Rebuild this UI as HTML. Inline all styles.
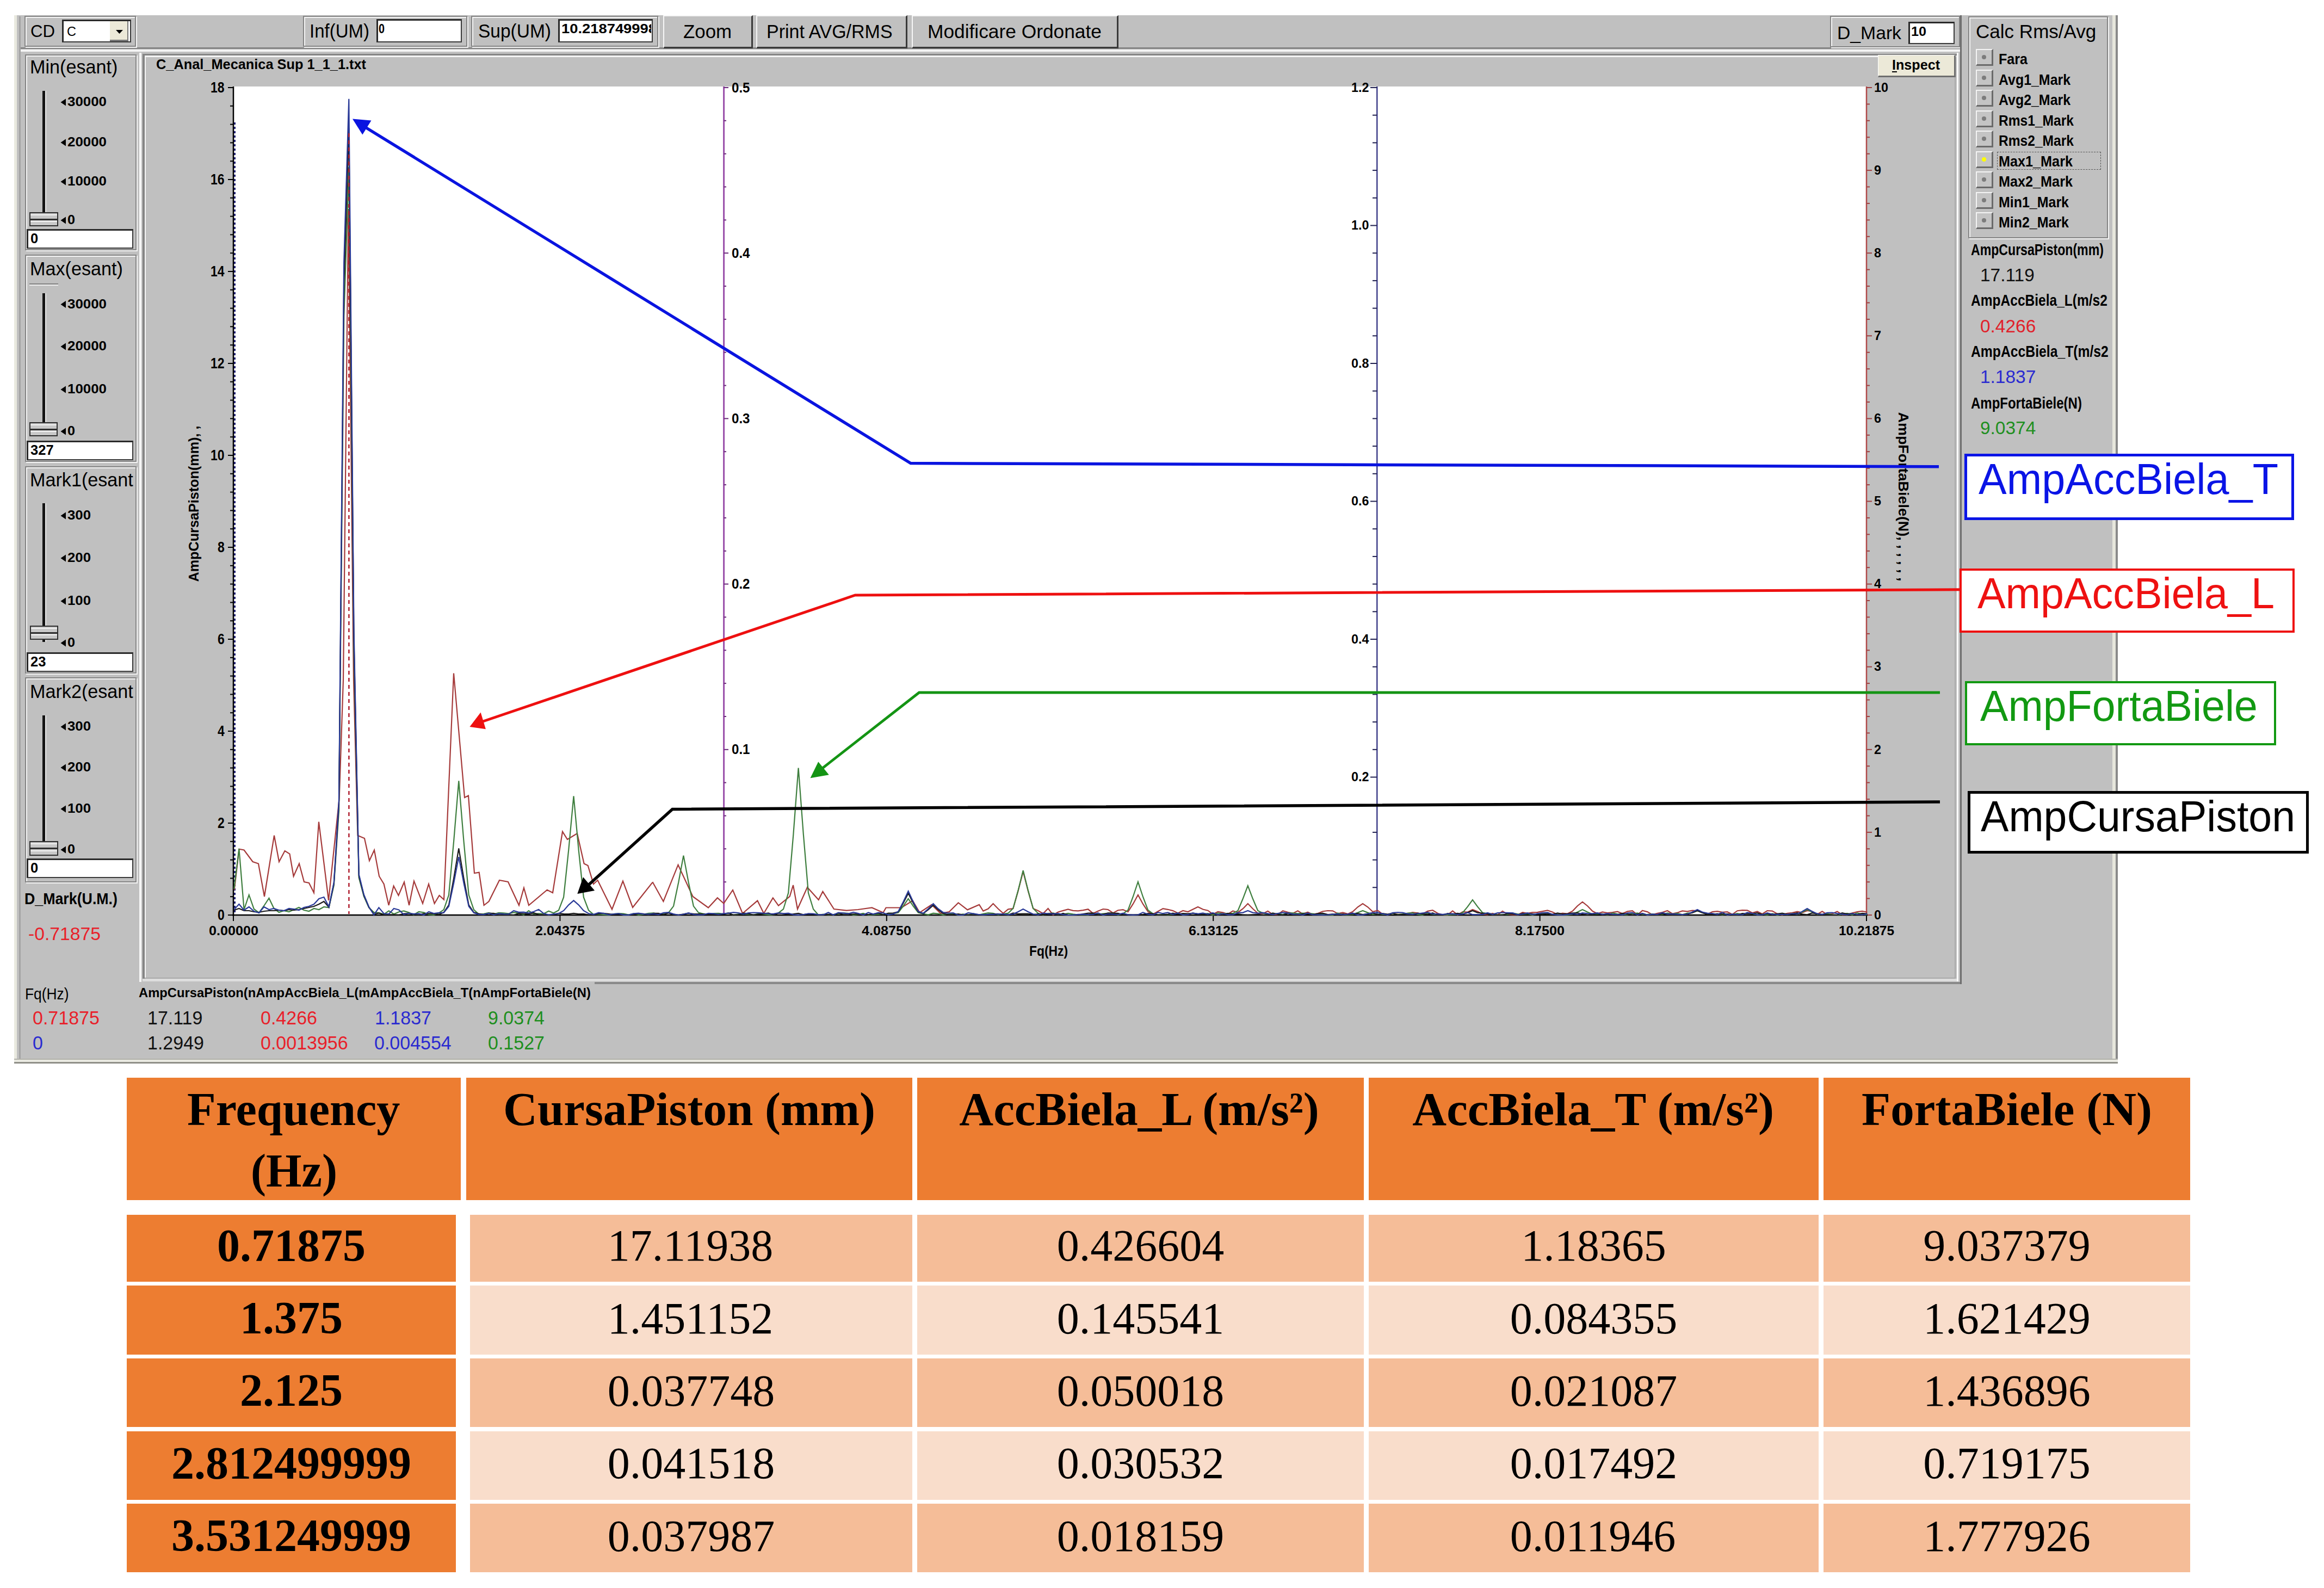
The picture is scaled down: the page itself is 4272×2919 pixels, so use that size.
<!DOCTYPE html>
<html><head><meta charset="utf-8"><style>
html,body{margin:0;padding:0;}
body{width:4272px;height:2919px;position:relative;overflow:hidden;background:#fff;}
.t{position:absolute;white-space:pre;font-kerning:none;}
.b{position:absolute;}
svg{position:absolute;left:0;top:0;}
</style></head><body>
<div class="b" style="left:26.0px;top:28.0px;width:3867.0px;height:1927.0px;background:#c0c0c0;"></div>
<div class="b" style="left:26.0px;top:28.0px;width:5.0px;height:1925.0px;background:#e9e9df;"></div>
<div class="b" style="left:35.0px;top:30.0px;width:3.0px;height:1923.0px;background:#a4a4a4;"></div>
<div class="b" style="left:3883.0px;top:28.0px;width:6.0px;height:1925.0px;background:#e6e6dc;"></div>
<div class="b" style="left:3889.0px;top:28.0px;width:4.0px;height:1925.0px;background:#8a8a8a;"></div>
<div class="b" style="left:26.0px;top:1945.5px;width:3867.0px;height:2.5px;background:#b2b2aa;"></div>
<div class="b" style="left:26.0px;top:1948.0px;width:3867.0px;height:4.0px;background:#ebebe3;"></div>
<div class="b" style="left:26.0px;top:1952.0px;width:3867.0px;height:3.0px;background:#8f8f88;"></div>
<div class="b" style="left:38.0px;top:87.0px;width:3568.0px;height:3.0px;background:#858585;"></div>
<div class="b" style="left:38.0px;top:91.0px;width:3568.0px;height:4.0px;background:#f4f4f4;"></div>
<div class="b" style="left:45.0px;top:29.0px;width:205.0px;height:57.0px;border:2px solid #858585;box-shadow:inset 2px 2px 0 #f4f4f4, 2px 2px 0 #f4f4f4;box-sizing:border-box;"></div>
<div class="t" style="left:56.0px;top:40.9px;font:normal 31.98px/31.98px 'Liberation Sans', sans-serif;color:#000;transform:scaleX(0.9743);transform-origin:0 0;">CD</div>
<div class="b" style="left:114.0px;top:36.0px;width:127.0px;height:42.0px;background:#fff;border-style:solid;border-width:3px 2px 2px 3px;border-color:#2a2a2a #3a3a3a #3a3a3a #2a2a2a;box-sizing:border-box;"></div>
<div class="t" style="left:123.0px;top:46.1px;font:normal 24.71px/24.71px 'Liberation Sans', sans-serif;color:#000;transform:scaleX(0.9527);transform-origin:0 0;">C</div>
<div class="b" style="left:202.0px;top:39.0px;width:34.0px;height:37.0px;background:#ece9d8;border-right:2px solid #777;border-bottom:3px solid #777;box-sizing:border-box;"></div>
<div class="b" style="left:557.0px;top:29.0px;width:302.0px;height:57.0px;border:2px solid #858585;box-shadow:inset 2px 2px 0 #f4f4f4, 2px 2px 0 #f4f4f4;box-sizing:border-box;"></div>
<div class="t" style="left:569.0px;top:40.1px;font:normal 34.16px/34.16px 'Liberation Sans', sans-serif;color:#000;transform:scaleX(0.9662);transform-origin:0 0;">Inf(UM)</div>
<div class="b" style="left:692.0px;top:35.0px;width:157.0px;height:43.0px;background:#fff;border-style:solid;border-width:3px 2px 2px 3px;border-color:#2a2a2a #3a3a3a #3a3a3a #2a2a2a;box-sizing:border-box;"></div>
<div class="t" style="left:696.0px;top:41.1px;font:bold 24.71px/24.71px 'Liberation Sans', sans-serif;color:#000;transform:scaleX(0.8005);transform-origin:0 0;">0</div>
<div class="b" style="left:866.0px;top:29.0px;width:344.0px;height:57.0px;border:2px solid #858585;box-shadow:inset 2px 2px 0 #f4f4f4, 2px 2px 0 #f4f4f4;box-sizing:border-box;"></div>
<div class="t" style="left:879.0px;top:40.1px;font:normal 34.16px/34.16px 'Liberation Sans', sans-serif;color:#000;transform:scaleX(0.9806);transform-origin:0 0;">Sup(UM)</div>
<div class="b" style="left:1026.0px;top:35.0px;width:174.0px;height:43.0px;background:#fff;border-style:solid;border-width:3px 2px 2px 3px;border-color:#2a2a2a #3a3a3a #3a3a3a #2a2a2a;box-sizing:border-box;"></div>
<div class="b" style="left:1029px;top:38px;width:168px;height:37px;overflow:hidden;">
<div class="t" style="left:3.0px;top:3.1px;font:bold 24.71px/24.71px 'Liberation Sans', sans-serif;color:#000;transform:scaleX(1.1074);transform-origin:0 0;">10.218749998</div>
</div>
<div class="b" style="left:1219.0px;top:28.0px;width:165.0px;height:61.0px;background:#c0c0c0;border-style:solid;border-width:2px 3px 3px 2px;border-color:#f6f6f6 #3a3a3a #3a3a3a #f6f6f6;box-sizing:border-box;"></div>
<div class="t" style="left:1256.0px;top:40.5px;font:normal 34.88px/34.88px 'Liberation Sans', sans-serif;color:#000;">Zoom</div>
<div class="b" style="left:1390.0px;top:28.0px;width:278.0px;height:61.0px;background:#c0c0c0;border-style:solid;border-width:2px 3px 3px 2px;border-color:#f6f6f6 #3a3a3a #3a3a3a #f6f6f6;box-sizing:border-box;"></div>
<div class="t" style="left:1409.0px;top:40.5px;font:normal 34.88px/34.88px 'Liberation Sans', sans-serif;color:#000;transform:scaleX(0.9740);transform-origin:0 0;">Print AVG/RMS</div>
<div class="b" style="left:1676.0px;top:28.0px;width:380.0px;height:61.0px;background:#c0c0c0;border-style:solid;border-width:2px 3px 3px 2px;border-color:#f6f6f6 #3a3a3a #3a3a3a #f6f6f6;box-sizing:border-box;"></div>
<div class="t" style="left:1705.0px;top:40.5px;font:normal 34.88px/34.88px 'Liberation Sans', sans-serif;color:#000;transform:scaleX(1.0125);transform-origin:0 0;">Modificare Ordonate</div>
<div class="b" style="left:3364.0px;top:29.0px;width:239.0px;height:58.0px;border:2px solid #858585;box-shadow:inset 2px 2px 0 #f4f4f4, 2px 2px 0 #f4f4f4;box-sizing:border-box;"></div>
<div class="t" style="left:3377.0px;top:43.7px;font:normal 33.43px/33.43px 'Liberation Sans', sans-serif;color:#000;transform:scaleX(1.0084);transform-origin:0 0;">D_Mark</div>
<div class="b" style="left:3508.0px;top:40.0px;width:85.0px;height:41.0px;background:#fff;border-style:solid;border-width:3px 2px 2px 3px;border-color:#2a2a2a #3a3a3a #3a3a3a #2a2a2a;box-sizing:border-box;"></div>
<div class="t" style="left:3513.0px;top:45.6px;font:bold 24.71px/24.71px 'Liberation Sans', sans-serif;color:#000;transform:scaleX(1.0188);transform-origin:0 0;">10</div>
<div class="b" style="left:46.0px;top:100.0px;width:205.0px;height:360.0px;border:2px solid #858585;box-shadow:inset 2px 2px 0 #f4f4f4, 2px 2px 0 #f4f4f4;box-sizing:border-box;"></div>
<div class="t" style="left:55.0px;top:106.1px;font:normal 34.16px/34.16px 'Liberation Sans', sans-serif;color:#000;">Min(esant)</div>
<div class="b" style="left:78.0px;top:167.0px;width:4.5px;height:237.0px;background:#141414;"></div>
<div class="b" style="left:83.0px;top:167.0px;width:2.0px;height:237.0px;background:#e8e8e8;"></div>
<div class="t" style="left:124.0px;top:176.3px;font:bold 23.26px/23.26px 'Liberation Sans', sans-serif;color:#000;transform:scaleX(1.1134);transform-origin:0 0;">30000</div>
<div class="t" style="left:124.0px;top:250.3px;font:bold 23.26px/23.26px 'Liberation Sans', sans-serif;color:#000;transform:scaleX(1.1134);transform-origin:0 0;">20000</div>
<div class="t" style="left:124.0px;top:322.3px;font:bold 23.26px/23.26px 'Liberation Sans', sans-serif;color:#000;transform:scaleX(1.1134);transform-origin:0 0;">10000</div>
<div class="t" style="left:124.0px;top:393.3px;font:bold 23.26px/23.26px 'Liberation Sans', sans-serif;color:#000;transform:scaleX(1.0824);transform-origin:0 0;">0</div>
<div class="b" style="left:53.5px;top:390.0px;width:53.0px;height:26.0px;background:#c8c8c8;border:2px solid #303030;box-sizing:border-box;"></div>
<div class="b" style="left:55.5px;top:401.5px;width:49.0px;height:3.0px;background:#303030;"></div>
<div class="b" style="left:55.5px;top:394.0px;width:49.0px;height:2.0px;background:#f0f0f0;"></div>
<div class="b" style="left:55.5px;top:406.0px;width:49.0px;height:2.0px;background:#f0f0f0;"></div>
<div class="b" style="left:49.0px;top:421.0px;width:196.0px;height:36.0px;background:#fff;border-style:solid;border-width:3px 2px 2px 3px;border-color:#2a2a2a #3a3a3a #3a3a3a #2a2a2a;box-sizing:border-box;"></div>
<div class="t" style="left:56.0px;top:424.8px;font:bold 26.16px/26.16px 'Liberation Sans', sans-serif;color:#000;transform:scaleX(0.9759);transform-origin:0 0;">0</div>
<div class="b" style="left:46.0px;top:468.0px;width:205.0px;height:381.0px;border:2px solid #858585;box-shadow:inset 2px 2px 0 #f4f4f4, 2px 2px 0 #f4f4f4;box-sizing:border-box;"></div>
<div class="t" style="left:55.0px;top:477.1px;font:normal 34.16px/34.16px 'Liberation Sans', sans-serif;color:#000;">Max(esant)</div>
<div class="b" style="left:78.0px;top:539.0px;width:4.5px;height:238.0px;background:#141414;"></div>
<div class="b" style="left:83.0px;top:539.0px;width:2.0px;height:238.0px;background:#e8e8e8;"></div>
<div class="t" style="left:124.0px;top:547.8px;font:bold 23.26px/23.26px 'Liberation Sans', sans-serif;color:#000;transform:scaleX(1.1134);transform-origin:0 0;">30000</div>
<div class="t" style="left:124.0px;top:625.3px;font:bold 23.26px/23.26px 'Liberation Sans', sans-serif;color:#000;transform:scaleX(1.1134);transform-origin:0 0;">20000</div>
<div class="t" style="left:124.0px;top:704.3px;font:bold 23.26px/23.26px 'Liberation Sans', sans-serif;color:#000;transform:scaleX(1.1134);transform-origin:0 0;">10000</div>
<div class="t" style="left:124.0px;top:781.3px;font:bold 23.26px/23.26px 'Liberation Sans', sans-serif;color:#000;transform:scaleX(1.0824);transform-origin:0 0;">0</div>
<div class="b" style="left:54.0px;top:776.0px;width:52.0px;height:26.0px;background:#c8c8c8;border:2px solid #303030;box-sizing:border-box;"></div>
<div class="b" style="left:56.0px;top:787.5px;width:48.0px;height:3.0px;background:#303030;"></div>
<div class="b" style="left:56.0px;top:780.0px;width:48.0px;height:2.0px;background:#f0f0f0;"></div>
<div class="b" style="left:56.0px;top:792.0px;width:48.0px;height:2.0px;background:#f0f0f0;"></div>
<div class="b" style="left:54.0px;top:521.0px;width:53.0px;height:2.0px;background:#808080;"></div>
<div class="b" style="left:54.0px;top:523.0px;width:53.0px;height:2.0px;background:#f0f0f0;"></div>
<div class="b" style="left:49.0px;top:810.0px;width:196.0px;height:36.0px;background:#fff;border-style:solid;border-width:3px 2px 2px 3px;border-color:#2a2a2a #3a3a3a #3a3a3a #2a2a2a;box-sizing:border-box;"></div>
<div class="t" style="left:56.0px;top:813.8px;font:bold 26.16px/26.16px 'Liberation Sans', sans-serif;color:#000;transform:scaleX(0.9759);transform-origin:0 0;">327</div>
<div class="b" style="left:46.0px;top:857.0px;width:205.0px;height:381.0px;border:2px solid #858585;box-shadow:inset 2px 2px 0 #f4f4f4, 2px 2px 0 #f4f4f4;box-sizing:border-box;"></div>
<div class="b" style="left:50px;top:861px;width:195px;height:40px;overflow:hidden;">
<div class="t" style="left:5.0px;top:4.1px;font:normal 34.16px/34.16px 'Liberation Sans', sans-serif;color:#000;">Mark1(esant)</div>
</div>
<div class="b" style="left:78.0px;top:925.0px;width:4.5px;height:255.0px;background:#141414;"></div>
<div class="b" style="left:83.0px;top:925.0px;width:2.0px;height:255.0px;background:#e8e8e8;"></div>
<div class="t" style="left:124.0px;top:936.3px;font:bold 23.26px/23.26px 'Liberation Sans', sans-serif;color:#000;transform:scaleX(1.1082);transform-origin:0 0;">300</div>
<div class="t" style="left:124.0px;top:1014.3px;font:bold 23.26px/23.26px 'Liberation Sans', sans-serif;color:#000;transform:scaleX(1.1082);transform-origin:0 0;">200</div>
<div class="t" style="left:124.0px;top:1093.3px;font:bold 23.26px/23.26px 'Liberation Sans', sans-serif;color:#000;transform:scaleX(1.1082);transform-origin:0 0;">100</div>
<div class="t" style="left:124.0px;top:1170.3px;font:bold 23.26px/23.26px 'Liberation Sans', sans-serif;color:#000;transform:scaleX(1.0824);transform-origin:0 0;">0</div>
<div class="b" style="left:54.7px;top:1150.0px;width:52.1px;height:26.0px;background:#c8c8c8;border:2px solid #303030;box-sizing:border-box;"></div>
<div class="b" style="left:56.7px;top:1161.5px;width:48.1px;height:3.0px;background:#303030;"></div>
<div class="b" style="left:56.7px;top:1154.0px;width:48.1px;height:2.0px;background:#f0f0f0;"></div>
<div class="b" style="left:56.7px;top:1166.0px;width:48.1px;height:2.0px;background:#f0f0f0;"></div>
<div class="b" style="left:49.0px;top:1199.0px;width:196.0px;height:36.0px;background:#fff;border-style:solid;border-width:3px 2px 2px 3px;border-color:#2a2a2a #3a3a3a #3a3a3a #2a2a2a;box-sizing:border-box;"></div>
<div class="t" style="left:56.0px;top:1202.8px;font:bold 26.16px/26.16px 'Liberation Sans', sans-serif;color:#000;transform:scaleX(0.9759);transform-origin:0 0;">23</div>
<div class="b" style="left:46.0px;top:1245.0px;width:205.0px;height:377.0px;border:2px solid #858585;box-shadow:inset 2px 2px 0 #f4f4f4, 2px 2px 0 #f4f4f4;box-sizing:border-box;"></div>
<div class="b" style="left:50px;top:1249px;width:195px;height:40px;overflow:hidden;">
<div class="t" style="left:5.0px;top:5.1px;font:normal 34.16px/34.16px 'Liberation Sans', sans-serif;color:#000;">Mark2(esant)</div>
</div>
<div class="b" style="left:78.0px;top:1315.0px;width:4.5px;height:232.0px;background:#141414;"></div>
<div class="b" style="left:83.0px;top:1315.0px;width:2.0px;height:232.0px;background:#e8e8e8;"></div>
<div class="t" style="left:124.0px;top:1324.3px;font:bold 23.26px/23.26px 'Liberation Sans', sans-serif;color:#000;transform:scaleX(1.1082);transform-origin:0 0;">300</div>
<div class="t" style="left:124.0px;top:1399.3px;font:bold 23.26px/23.26px 'Liberation Sans', sans-serif;color:#000;transform:scaleX(1.1082);transform-origin:0 0;">200</div>
<div class="t" style="left:124.0px;top:1475.3px;font:bold 23.26px/23.26px 'Liberation Sans', sans-serif;color:#000;transform:scaleX(1.1082);transform-origin:0 0;">100</div>
<div class="t" style="left:124.0px;top:1550.3px;font:bold 23.26px/23.26px 'Liberation Sans', sans-serif;color:#000;transform:scaleX(1.0824);transform-origin:0 0;">0</div>
<div class="b" style="left:54.0px;top:1546.0px;width:53.0px;height:27.0px;background:#c8c8c8;border:2px solid #303030;box-sizing:border-box;"></div>
<div class="b" style="left:56.0px;top:1558.0px;width:49.0px;height:3.0px;background:#303030;"></div>
<div class="b" style="left:56.0px;top:1550.0px;width:49.0px;height:2.0px;background:#f0f0f0;"></div>
<div class="b" style="left:56.0px;top:1562.5px;width:49.0px;height:2.0px;background:#f0f0f0;"></div>
<div class="b" style="left:49.0px;top:1578.0px;width:196.0px;height:36.0px;background:#fff;border-style:solid;border-width:3px 2px 2px 3px;border-color:#2a2a2a #3a3a3a #3a3a3a #2a2a2a;box-sizing:border-box;"></div>
<div class="t" style="left:56.0px;top:1581.8px;font:bold 26.16px/26.16px 'Liberation Sans', sans-serif;color:#000;transform:scaleX(0.9759);transform-origin:0 0;">0</div>
<div class="t" style="left:45.0px;top:1638.4px;font:bold 29.07px/29.07px 'Liberation Sans', sans-serif;color:#000;transform:scaleX(0.9206);transform-origin:0 0;">D_Mark(U.M.)</div>
<div class="t" style="left:52.0px;top:1699.7px;font:normal 33.43px/33.43px 'Liberation Sans', sans-serif;color:#e8202a;transform:scaleX(1.0078);transform-origin:0 0;">-0.71875</div>
<div class="b" style="left:256.0px;top:97.0px;width:3.5px;height:1708.0px;background:#f6f6f6;"></div>
<div class="b" style="left:262.0px;top:98.6px;width:3338.0px;height:3.2px;background:#858585;"></div>
<div class="b" style="left:265.5px;top:102.0px;width:3330.5px;height:2.5px;background:#f4f4f4;"></div>
<div class="b" style="left:262.0px;top:98.6px;width:3.5px;height:1705.4px;background:#858585;"></div>
<div class="b" style="left:265.5px;top:102.0px;width:2.0px;height:1695.0px;background:#f4f4f4;"></div>
<div class="b" style="left:266.0px;top:1797.0px;width:3329.0px;height:2.0px;background:#a9a9a9;"></div>
<div class="b" style="left:262.0px;top:1799.0px;width:3338.0px;height:5.4px;background:#dedede;"></div>
<div class="b" style="left:1093.0px;top:1805.0px;width:2512.5px;height:3.5px;background:#8a8a8a;"></div>
<div class="b" style="left:3593.0px;top:102.0px;width:2.0px;height:1697.0px;background:#a9a9a9;"></div>
<div class="t" style="left:287.0px;top:106.4px;font:bold 25.00px/25.00px 'Liberation Sans', sans-serif;color:#000;transform:scaleX(1.0139);transform-origin:0 0;">C_Anal_Mecanica Sup 1_1_1.txt</div>
<div class="b" style="left:3452.0px;top:101.0px;width:143.0px;height:41.0px;background:#ece9d8;border-style:solid;border-width:1px 3px 3px 1px;border-color:#fff #6f6f6f #6f6f6f #fff;box-sizing:border-box;"></div>
<div class="t" style="left:3478.0px;top:106.7px;font:bold 25.44px/25.44px 'Liberation Sans', sans-serif;color:#000;transform:scaleX(0.9882);transform-origin:0 0;">Inspect</div>
<div class="b" style="left:3478.0px;top:131.0px;width:9.0px;height:2.0px;background:#000;"></div>
<div class="b" style="left:429.0px;top:159.0px;width:3002.0px;height:1523.0px;background:#fff;"></div>
<div class="b" style="left:3596.8px;top:97.0px;width:2.8px;height:1707.4px;background:#fafafa;"></div>
<div class="b" style="left:3602.8px;top:28.0px;width:2.8px;height:1780.5px;background:#6e6e6e;"></div>
<div class="b" style="left:3618.0px;top:30.0px;width:257.0px;height:408.0px;border:2px solid #858585;box-shadow:inset 2px 2px 0 #f4f4f4, 2px 2px 0 #f4f4f4;box-sizing:border-box;"></div>
<div class="t" style="left:3632.0px;top:40.9px;font:normal 34.88px/34.88px 'Liberation Sans', sans-serif;color:#000;transform:scaleX(1.0047);transform-origin:0 0;">Calc Rms/Avg</div>
<div class="b" style="left:3632.0px;top:90.4px;width:32.0px;height:31.0px;background:#c4c4c4;border-style:solid;border-width:2px 3px 3px 2px;border-color:#f4f4f4 #6a6a6a #6a6a6a #f4f4f4;box-sizing:border-box;"></div>
<div class="b" style="left:3643.0px;top:101.4px;width:8px;height:8px;border-radius:4px;background:#7c7c7c;"></div>
<div class="t" style="left:3674.0px;top:95.2px;font:bold 27.62px/27.62px 'Liberation Sans', sans-serif;color:#000;transform:scaleX(0.9086);transform-origin:0 0;">Fara</div>
<div class="b" style="left:3632.0px;top:127.9px;width:32.0px;height:31.0px;background:#c4c4c4;border-style:solid;border-width:2px 3px 3px 2px;border-color:#f4f4f4 #6a6a6a #6a6a6a #f4f4f4;box-sizing:border-box;"></div>
<div class="b" style="left:3643.0px;top:138.9px;width:8px;height:8px;border-radius:4px;background:#7c7c7c;"></div>
<div class="t" style="left:3674.0px;top:132.7px;font:bold 27.62px/27.62px 'Liberation Sans', sans-serif;color:#000;transform:scaleX(0.9026);transform-origin:0 0;">Avg1_Mark</div>
<div class="b" style="left:3632.0px;top:165.4px;width:32.0px;height:31.0px;background:#c4c4c4;border-style:solid;border-width:2px 3px 3px 2px;border-color:#f4f4f4 #6a6a6a #6a6a6a #f4f4f4;box-sizing:border-box;"></div>
<div class="b" style="left:3643.0px;top:176.4px;width:8px;height:8px;border-radius:4px;background:#7c7c7c;"></div>
<div class="t" style="left:3674.0px;top:170.2px;font:bold 27.62px/27.62px 'Liberation Sans', sans-serif;color:#000;transform:scaleX(0.9026);transform-origin:0 0;">Avg2_Mark</div>
<div class="b" style="left:3632.0px;top:202.9px;width:32.0px;height:31.0px;background:#c4c4c4;border-style:solid;border-width:2px 3px 3px 2px;border-color:#f4f4f4 #6a6a6a #6a6a6a #f4f4f4;box-sizing:border-box;"></div>
<div class="b" style="left:3643.0px;top:213.9px;width:8px;height:8px;border-radius:4px;background:#7c7c7c;"></div>
<div class="t" style="left:3674.0px;top:207.7px;font:bold 27.62px/27.62px 'Liberation Sans', sans-serif;color:#000;transform:scaleX(0.8901);transform-origin:0 0;">Rms1_Mark</div>
<div class="b" style="left:3632.0px;top:240.4px;width:32.0px;height:31.0px;background:#c4c4c4;border-style:solid;border-width:2px 3px 3px 2px;border-color:#f4f4f4 #6a6a6a #6a6a6a #f4f4f4;box-sizing:border-box;"></div>
<div class="b" style="left:3643.0px;top:251.4px;width:8px;height:8px;border-radius:4px;background:#7c7c7c;"></div>
<div class="t" style="left:3674.0px;top:245.2px;font:bold 27.62px/27.62px 'Liberation Sans', sans-serif;color:#000;transform:scaleX(0.8901);transform-origin:0 0;">Rms2_Mark</div>
<div class="b" style="left:3632.0px;top:277.9px;width:32.0px;height:31.0px;background:#c4c4c4;border-style:solid;border-width:2px 3px 3px 2px;border-color:#f4f4f4 #6a6a6a #6a6a6a #f4f4f4;box-sizing:border-box;"></div>
<div class="b" style="left:3643.0px;top:288.9px;width:8px;height:8px;border-radius:4px;background:#ffff00;"></div>
<div class="t" style="left:3674.0px;top:282.7px;font:bold 27.62px/27.62px 'Liberation Sans', sans-serif;color:#000;transform:scaleX(0.9133);transform-origin:0 0;">Max1_Mark</div>
<div class="b" style="left:3632.0px;top:315.4px;width:32.0px;height:31.0px;background:#c4c4c4;border-style:solid;border-width:2px 3px 3px 2px;border-color:#f4f4f4 #6a6a6a #6a6a6a #f4f4f4;box-sizing:border-box;"></div>
<div class="b" style="left:3643.0px;top:326.4px;width:8px;height:8px;border-radius:4px;background:#7c7c7c;"></div>
<div class="t" style="left:3674.0px;top:320.2px;font:bold 27.62px/27.62px 'Liberation Sans', sans-serif;color:#000;transform:scaleX(0.9133);transform-origin:0 0;">Max2_Mark</div>
<div class="b" style="left:3632.0px;top:352.9px;width:32.0px;height:31.0px;background:#c4c4c4;border-style:solid;border-width:2px 3px 3px 2px;border-color:#f4f4f4 #6a6a6a #6a6a6a #f4f4f4;box-sizing:border-box;"></div>
<div class="b" style="left:3643.0px;top:363.9px;width:8px;height:8px;border-radius:4px;background:#7c7c7c;"></div>
<div class="t" style="left:3674.0px;top:357.7px;font:bold 27.62px/27.62px 'Liberation Sans', sans-serif;color:#000;transform:scaleX(0.9038);transform-origin:0 0;">Min1_Mark</div>
<div class="b" style="left:3632.0px;top:390.4px;width:32.0px;height:31.0px;background:#c4c4c4;border-style:solid;border-width:2px 3px 3px 2px;border-color:#f4f4f4 #6a6a6a #6a6a6a #f4f4f4;box-sizing:border-box;"></div>
<div class="b" style="left:3643.0px;top:401.4px;width:8px;height:8px;border-radius:4px;background:#7c7c7c;"></div>
<div class="t" style="left:3674.0px;top:395.2px;font:bold 27.62px/27.62px 'Liberation Sans', sans-serif;color:#000;transform:scaleX(0.9038);transform-origin:0 0;">Min2_Mark</div>
<div class="b" style="left:3671.0px;top:279.0px;width:191.0px;height:33.0px;border:1.5px dashed #555;box-sizing:border-box;"></div>
<div class="t" style="left:3623.0px;top:444.4px;font:bold 30.23px/30.23px 'Liberation Sans', sans-serif;color:#000;transform:scaleX(0.7645);transform-origin:0 0;">AmpCursaPiston(mm)</div>
<div class="t" style="left:3640.0px;top:488.7px;font:normal 33.43px/33.43px 'Liberation Sans', sans-serif;color:#111;">17.119</div>
<div class="t" style="left:3623.0px;top:536.9px;font:bold 30.23px/30.23px 'Liberation Sans', sans-serif;color:#000;transform:scaleX(0.8119);transform-origin:0 0;">AmpAccBiela_L(m/s2</div>
<div class="t" style="left:3640.0px;top:583.3px;font:normal 33.43px/33.43px 'Liberation Sans', sans-serif;color:#e0202a;">0.4266</div>
<div class="t" style="left:3623.0px;top:631.4px;font:bold 30.23px/30.23px 'Liberation Sans', sans-serif;color:#000;transform:scaleX(0.8183);transform-origin:0 0;">AmpAccBiela_T(m/s2</div>
<div class="t" style="left:3640.0px;top:675.7px;font:normal 33.43px/33.43px 'Liberation Sans', sans-serif;color:#2a2ad0;">1.1837</div>
<div class="t" style="left:3623.0px;top:725.9px;font:bold 30.23px/30.23px 'Liberation Sans', sans-serif;color:#000;transform:scaleX(0.7938);transform-origin:0 0;">AmpFortaBiele(N)</div>
<div class="t" style="left:3640.0px;top:770.4px;font:normal 33.43px/33.43px 'Liberation Sans', sans-serif;color:#1f8f1f;">9.0374</div>
<div class="t" style="left:400.2px;top:1668.7px;font:bold 26.89px/26.89px 'Liberation Sans', sans-serif;color:#000;transform:scaleX(0.8559);transform-origin:0 0;">0</div>
<div class="t" style="left:400.2px;top:1499.7px;font:bold 26.89px/26.89px 'Liberation Sans', sans-serif;color:#000;transform:scaleX(0.8559);transform-origin:0 0;">2</div>
<div class="t" style="left:400.2px;top:1330.7px;font:bold 26.89px/26.89px 'Liberation Sans', sans-serif;color:#000;transform:scaleX(0.8559);transform-origin:0 0;">4</div>
<div class="t" style="left:400.2px;top:1161.7px;font:bold 26.89px/26.89px 'Liberation Sans', sans-serif;color:#000;transform:scaleX(0.8559);transform-origin:0 0;">6</div>
<div class="t" style="left:400.2px;top:992.7px;font:bold 26.89px/26.89px 'Liberation Sans', sans-serif;color:#000;transform:scaleX(0.8559);transform-origin:0 0;">8</div>
<div class="t" style="left:387.4px;top:823.7px;font:bold 26.89px/26.89px 'Liberation Sans', sans-serif;color:#000;transform:scaleX(0.8559);transform-origin:0 0;">10</div>
<div class="t" style="left:387.4px;top:654.7px;font:bold 26.89px/26.89px 'Liberation Sans', sans-serif;color:#000;transform:scaleX(0.8559);transform-origin:0 0;">12</div>
<div class="t" style="left:387.4px;top:485.7px;font:bold 26.89px/26.89px 'Liberation Sans', sans-serif;color:#000;transform:scaleX(0.8559);transform-origin:0 0;">14</div>
<div class="t" style="left:387.4px;top:316.7px;font:bold 26.89px/26.89px 'Liberation Sans', sans-serif;color:#000;transform:scaleX(0.8559);transform-origin:0 0;">16</div>
<div class="t" style="left:387.4px;top:147.7px;font:bold 26.89px/26.89px 'Liberation Sans', sans-serif;color:#000;transform:scaleX(0.8559);transform-origin:0 0;">18</div>
<div class="t" style="left:1344.5px;top:1365.3px;font:bold 25.44px/25.44px 'Liberation Sans', sans-serif;color:#000;transform:scaleX(0.9474);transform-origin:0 0;">0.1</div>
<div class="t" style="left:1344.5px;top:1061.1px;font:bold 25.44px/25.44px 'Liberation Sans', sans-serif;color:#000;transform:scaleX(0.9474);transform-origin:0 0;">0.2</div>
<div class="t" style="left:1344.5px;top:756.9px;font:bold 25.44px/25.44px 'Liberation Sans', sans-serif;color:#000;transform:scaleX(0.9474);transform-origin:0 0;">0.3</div>
<div class="t" style="left:1344.5px;top:452.7px;font:bold 25.44px/25.44px 'Liberation Sans', sans-serif;color:#000;transform:scaleX(0.9474);transform-origin:0 0;">0.4</div>
<div class="t" style="left:1344.5px;top:148.5px;font:bold 25.44px/25.44px 'Liberation Sans', sans-serif;color:#000;transform:scaleX(0.9474);transform-origin:0 0;">0.5</div>
<div class="t" style="left:2483.6px;top:1416.2px;font:bold 23.98px/23.98px 'Liberation Sans', sans-serif;color:#000;transform:scaleX(0.9718);transform-origin:0 0;">0.2</div>
<div class="t" style="left:2483.6px;top:1162.7px;font:bold 23.98px/23.98px 'Liberation Sans', sans-serif;color:#000;transform:scaleX(0.9718);transform-origin:0 0;">0.4</div>
<div class="t" style="left:2483.6px;top:909.2px;font:bold 23.98px/23.98px 'Liberation Sans', sans-serif;color:#000;transform:scaleX(0.9718);transform-origin:0 0;">0.6</div>
<div class="t" style="left:2483.6px;top:655.7px;font:bold 23.98px/23.98px 'Liberation Sans', sans-serif;color:#000;transform:scaleX(0.9718);transform-origin:0 0;">0.8</div>
<div class="t" style="left:2483.6px;top:402.2px;font:bold 23.98px/23.98px 'Liberation Sans', sans-serif;color:#000;transform:scaleX(0.9718);transform-origin:0 0;">1.0</div>
<div class="t" style="left:2483.6px;top:148.7px;font:bold 23.98px/23.98px 'Liberation Sans', sans-serif;color:#000;transform:scaleX(0.9718);transform-origin:0 0;">1.2</div>
<div class="t" style="left:3445.0px;top:1669.7px;font:bold 23.98px/23.98px 'Liberation Sans', sans-serif;color:#000;transform:scaleX(0.9747);transform-origin:0 0;">0</div>
<div class="t" style="left:3445.0px;top:1517.6px;font:bold 23.98px/23.98px 'Liberation Sans', sans-serif;color:#000;transform:scaleX(0.9747);transform-origin:0 0;">1</div>
<div class="t" style="left:3445.0px;top:1365.5px;font:bold 23.98px/23.98px 'Liberation Sans', sans-serif;color:#000;transform:scaleX(0.9747);transform-origin:0 0;">2</div>
<div class="t" style="left:3445.0px;top:1213.4px;font:bold 23.98px/23.98px 'Liberation Sans', sans-serif;color:#000;transform:scaleX(0.9747);transform-origin:0 0;">3</div>
<div class="t" style="left:3445.0px;top:1061.3px;font:bold 23.98px/23.98px 'Liberation Sans', sans-serif;color:#000;transform:scaleX(0.9747);transform-origin:0 0;">4</div>
<div class="t" style="left:3445.0px;top:909.2px;font:bold 23.98px/23.98px 'Liberation Sans', sans-serif;color:#000;transform:scaleX(0.9747);transform-origin:0 0;">5</div>
<div class="t" style="left:3445.0px;top:757.1px;font:bold 23.98px/23.98px 'Liberation Sans', sans-serif;color:#000;transform:scaleX(0.9747);transform-origin:0 0;">6</div>
<div class="t" style="left:3445.0px;top:605.0px;font:bold 23.98px/23.98px 'Liberation Sans', sans-serif;color:#000;transform:scaleX(0.9747);transform-origin:0 0;">7</div>
<div class="t" style="left:3445.0px;top:452.9px;font:bold 23.98px/23.98px 'Liberation Sans', sans-serif;color:#000;transform:scaleX(0.9747);transform-origin:0 0;">8</div>
<div class="t" style="left:3445.0px;top:300.8px;font:bold 23.98px/23.98px 'Liberation Sans', sans-serif;color:#000;transform:scaleX(0.9747);transform-origin:0 0;">9</div>
<div class="t" style="left:3445.0px;top:148.7px;font:bold 23.98px/23.98px 'Liberation Sans', sans-serif;color:#000;transform:scaleX(0.9747);transform-origin:0 0;">10</div>
<div class="t" style="left:383.5px;top:1699.2px;font:bold 24.13px/24.13px 'Liberation Sans', sans-serif;color:#000;transform:scaleX(1.0434);transform-origin:0 0;">0.00000</div>
<div class="t" style="left:983.9px;top:1699.2px;font:bold 24.13px/24.13px 'Liberation Sans', sans-serif;color:#000;transform:scaleX(1.0434);transform-origin:0 0;">2.04375</div>
<div class="t" style="left:1584.3px;top:1699.2px;font:bold 24.13px/24.13px 'Liberation Sans', sans-serif;color:#000;transform:scaleX(1.0434);transform-origin:0 0;">4.08750</div>
<div class="t" style="left:2184.7px;top:1699.2px;font:bold 24.13px/24.13px 'Liberation Sans', sans-serif;color:#000;transform:scaleX(1.0434);transform-origin:0 0;">6.13125</div>
<div class="t" style="left:2785.1px;top:1699.2px;font:bold 24.13px/24.13px 'Liberation Sans', sans-serif;color:#000;transform:scaleX(1.0434);transform-origin:0 0;">8.17500</div>
<div class="t" style="left:3380.0px;top:1699.2px;font:bold 24.13px/24.13px 'Liberation Sans', sans-serif;color:#000;transform:scaleX(1.0136);transform-origin:0 0;">10.21875</div>
<div class="t" style="left:1891.7px;top:1735.9px;font:bold 25.58px/25.58px 'Liberation Sans', sans-serif;color:#000;transform:scaleX(0.8925);transform-origin:0 0;">Fq(Hz)</div>
<div class="t" style="left:355.5px;top:925.5px;width:298.0px;height:26.2px;font:bold 26.16px/26.16px 'Liberation Sans', sans-serif;color:#000;text-align:center;transform:translate(-50%,-50%) rotate(-90deg) scaleX(0.9631);">AmpCursaPiston(mm), ,</div>
<div class="t" style="left:3499.0px;top:912.5px;width:302.4px;height:26.2px;font:bold 26.16px/26.16px 'Liberation Sans', sans-serif;color:#000;text-align:center;transform:translate(-50%,-50%) rotate(90deg) scaleX(1.0286);">AmpFortaBiele(N), , , , , ,</div>
<div class="t" style="left:45.5px;top:1813.4px;font:normal 29.07px/29.07px 'Liberation Sans', sans-serif;color:#000;transform:scaleX(0.9064);transform-origin:0 0;">Fq(Hz)</div>
<div class="t" style="left:255.0px;top:1813.1px;font:bold 24.71px/24.71px 'Liberation Sans', sans-serif;color:#000;transform:scaleX(0.9623);transform-origin:0 0;">AmpCursaPiston(nAmpAccBiela_L(mAmpAccBiela_T(nAmpFortaBiele(N)</div>
<div class="t" style="left:60.0px;top:1853.5px;font:normal 34.88px/34.88px 'Liberation Sans', sans-serif;color:#e8202a;transform:scaleX(0.9743);transform-origin:0 0;">0.71875</div>
<div class="t" style="left:271.0px;top:1853.5px;font:normal 34.88px/34.88px 'Liberation Sans', sans-serif;color:#111;transform:scaleX(0.9743);transform-origin:0 0;">17.119</div>
<div class="t" style="left:479.0px;top:1853.5px;font:normal 34.88px/34.88px 'Liberation Sans', sans-serif;color:#e8202a;transform:scaleX(0.9743);transform-origin:0 0;">0.4266</div>
<div class="t" style="left:689.0px;top:1853.5px;font:normal 34.88px/34.88px 'Liberation Sans', sans-serif;color:#2a2ad0;transform:scaleX(0.9743);transform-origin:0 0;">1.1837</div>
<div class="t" style="left:897.0px;top:1853.5px;font:normal 34.88px/34.88px 'Liberation Sans', sans-serif;color:#1f8f1f;transform:scaleX(0.9743);transform-origin:0 0;">9.0374</div>
<div class="t" style="left:60.0px;top:1899.5px;font:normal 34.88px/34.88px 'Liberation Sans', sans-serif;color:#2a2ad0;transform:scaleX(0.9742);transform-origin:0 0;">0</div>
<div class="t" style="left:271.0px;top:1899.5px;font:normal 34.88px/34.88px 'Liberation Sans', sans-serif;color:#111;transform:scaleX(0.9743);transform-origin:0 0;">1.2949</div>
<div class="t" style="left:479.0px;top:1899.5px;font:normal 34.88px/34.88px 'Liberation Sans', sans-serif;color:#e8202a;transform:scaleX(0.9742);transform-origin:0 0;">0.0013956</div>
<div class="t" style="left:688.0px;top:1899.5px;font:normal 34.88px/34.88px 'Liberation Sans', sans-serif;color:#2a2ad0;transform:scaleX(0.9743);transform-origin:0 0;">0.004554</div>
<div class="t" style="left:897.0px;top:1899.5px;font:normal 34.88px/34.88px 'Liberation Sans', sans-serif;color:#1f8f1f;transform:scaleX(0.9743);transform-origin:0 0;">0.1527</div>
<div class="b" style="left:233.0px;top:1981.0px;width:3793.0px;height:225.0px;background:#fff;"></div>
<div class="b" style="left:233.0px;top:1981.0px;width:614.0px;height:225.0px;background:#ed7d31;"></div>
<div class="b" style="left:857.0px;top:1981.0px;width:820.0px;height:225.0px;background:#ed7d31;"></div>
<div class="b" style="left:1686.0px;top:1981.0px;width:821.0px;height:225.0px;background:#ed7d31;"></div>
<div class="b" style="left:2516.0px;top:1981.0px;width:827.0px;height:225.0px;background:#ed7d31;"></div>
<div class="b" style="left:3352.0px;top:1981.0px;width:674.0px;height:225.0px;background:#ed7d31;"></div>
<div class="b" style="left:233.0px;top:2232.5px;width:605.0px;height:123.5px;background:#ed7d31;"></div>
<div class="t" style="left:399.0px;top:2247.7px;font:bold 84.00px/84.00px 'Liberation Serif', serif;color:#000;">0.71875</div>
<div class="b" style="left:864.0px;top:2232.5px;width:813.0px;height:123.5px;background:#f5bd98;"></div>
<div class="t" style="left:1116.8px;top:2249.3px;font:normal 82.00px/82.00px 'Liberation Serif', serif;color:#000;">17.11938</div>
<div class="b" style="left:1686.0px;top:2232.5px;width:821.0px;height:123.5px;background:#f5bd98;"></div>
<div class="t" style="left:1942.8px;top:2249.3px;font:normal 82.00px/82.00px 'Liberation Serif', serif;color:#000;">0.426604</div>
<div class="b" style="left:2516.0px;top:2232.5px;width:827.0px;height:123.5px;background:#f5bd98;"></div>
<div class="t" style="left:2796.2px;top:2249.3px;font:normal 82.00px/82.00px 'Liberation Serif', serif;color:#000;">1.18365</div>
<div class="b" style="left:3352.0px;top:2232.5px;width:674.0px;height:123.5px;background:#f5bd98;"></div>
<div class="t" style="left:3535.2px;top:2249.3px;font:normal 82.00px/82.00px 'Liberation Serif', serif;color:#000;">9.037379</div>
<div class="b" style="left:233.0px;top:2363.0px;width:605.0px;height:127.0px;background:#ed7d31;"></div>
<div class="t" style="left:441.0px;top:2381.0px;font:bold 84.00px/84.00px 'Liberation Serif', serif;color:#000;">1.375</div>
<div class="b" style="left:864.0px;top:2363.0px;width:813.0px;height:127.0px;background:#f9ddcb;"></div>
<div class="t" style="left:1116.8px;top:2382.6px;font:normal 82.00px/82.00px 'Liberation Serif', serif;color:#000;">1.451152</div>
<div class="b" style="left:1686.0px;top:2363.0px;width:821.0px;height:127.0px;background:#f9ddcb;"></div>
<div class="t" style="left:1942.8px;top:2382.6px;font:normal 82.00px/82.00px 'Liberation Serif', serif;color:#000;">0.145541</div>
<div class="b" style="left:2516.0px;top:2363.0px;width:827.0px;height:127.0px;background:#f9ddcb;"></div>
<div class="t" style="left:2775.8px;top:2382.6px;font:normal 82.00px/82.00px 'Liberation Serif', serif;color:#000;">0.084355</div>
<div class="b" style="left:3352.0px;top:2363.0px;width:674.0px;height:127.0px;background:#f9ddcb;"></div>
<div class="t" style="left:3535.2px;top:2382.6px;font:normal 82.00px/82.00px 'Liberation Serif', serif;color:#000;">1.621429</div>
<div class="b" style="left:233.0px;top:2497.0px;width:605.0px;height:126.0px;background:#ed7d31;"></div>
<div class="t" style="left:441.0px;top:2514.3px;font:bold 84.00px/84.00px 'Liberation Serif', serif;color:#000;">2.125</div>
<div class="b" style="left:864.0px;top:2497.0px;width:813.0px;height:126.0px;background:#f5bd98;"></div>
<div class="t" style="left:1116.8px;top:2515.9px;font:normal 82.00px/82.00px 'Liberation Serif', serif;color:#000;">0.037748</div>
<div class="b" style="left:1686.0px;top:2497.0px;width:821.0px;height:126.0px;background:#f5bd98;"></div>
<div class="t" style="left:1942.8px;top:2515.9px;font:normal 82.00px/82.00px 'Liberation Serif', serif;color:#000;">0.050018</div>
<div class="b" style="left:2516.0px;top:2497.0px;width:827.0px;height:126.0px;background:#f5bd98;"></div>
<div class="t" style="left:2775.8px;top:2515.9px;font:normal 82.00px/82.00px 'Liberation Serif', serif;color:#000;">0.021087</div>
<div class="b" style="left:3352.0px;top:2497.0px;width:674.0px;height:126.0px;background:#f5bd98;"></div>
<div class="t" style="left:3535.2px;top:2515.9px;font:normal 82.00px/82.00px 'Liberation Serif', serif;color:#000;">1.436896</div>
<div class="b" style="left:233.0px;top:2630.5px;width:605.0px;height:126.5px;background:#ed7d31;"></div>
<div class="t" style="left:315.0px;top:2647.6px;font:bold 84.00px/84.00px 'Liberation Serif', serif;color:#000;">2.812499999</div>
<div class="b" style="left:864.0px;top:2630.5px;width:813.0px;height:126.5px;background:#f9ddcb;"></div>
<div class="t" style="left:1116.8px;top:2649.2px;font:normal 82.00px/82.00px 'Liberation Serif', serif;color:#000;">0.041518</div>
<div class="b" style="left:1686.0px;top:2630.5px;width:821.0px;height:126.5px;background:#f9ddcb;"></div>
<div class="t" style="left:1942.8px;top:2649.2px;font:normal 82.00px/82.00px 'Liberation Serif', serif;color:#000;">0.030532</div>
<div class="b" style="left:2516.0px;top:2630.5px;width:827.0px;height:126.5px;background:#f9ddcb;"></div>
<div class="t" style="left:2775.8px;top:2649.2px;font:normal 82.00px/82.00px 'Liberation Serif', serif;color:#000;">0.017492</div>
<div class="b" style="left:3352.0px;top:2630.5px;width:674.0px;height:126.5px;background:#f9ddcb;"></div>
<div class="t" style="left:3535.2px;top:2649.2px;font:normal 82.00px/82.00px 'Liberation Serif', serif;color:#000;">0.719175</div>
<div class="b" style="left:233.0px;top:2764.0px;width:605.0px;height:126.0px;background:#ed7d31;"></div>
<div class="t" style="left:315.0px;top:2780.9px;font:bold 84.00px/84.00px 'Liberation Serif', serif;color:#000;">3.531249999</div>
<div class="b" style="left:864.0px;top:2764.0px;width:813.0px;height:126.0px;background:#f5bd98;"></div>
<div class="t" style="left:1116.8px;top:2782.5px;font:normal 82.00px/82.00px 'Liberation Serif', serif;color:#000;">0.037987</div>
<div class="b" style="left:1686.0px;top:2764.0px;width:821.0px;height:126.0px;background:#f5bd98;"></div>
<div class="t" style="left:1942.8px;top:2782.5px;font:normal 82.00px/82.00px 'Liberation Serif', serif;color:#000;">0.018159</div>
<div class="b" style="left:2516.0px;top:2764.0px;width:827.0px;height:126.0px;background:#f5bd98;"></div>
<div class="t" style="left:2775.8px;top:2782.5px;font:normal 82.00px/82.00px 'Liberation Serif', serif;color:#000;">0.011946</div>
<div class="b" style="left:3352.0px;top:2764.0px;width:674.0px;height:126.0px;background:#f5bd98;"></div>
<div class="t" style="left:3535.2px;top:2782.5px;font:normal 82.00px/82.00px 'Liberation Serif', serif;color:#000;">1.777926</div>
<div class="t" style="left:343.5px;top:1995.4px;font:bold 87.02px/87.02px 'Liberation Serif', serif;color:#000;transform:scaleX(0.9915);transform-origin:0 0;">Frequency</div>
<div class="t" style="left:460.5px;top:2107.6px;font:bold 87.02px/87.02px 'Liberation Serif', serif;color:#000;transform:scaleX(0.9679);transform-origin:0 0;">(Hz)</div>
<div class="t" style="left:925.1px;top:1995.4px;font:bold 87.00px/87.00px 'Liberation Serif', serif;color:#000;">CursaPiston (mm)</div>
<div class="t" style="left:1763.3px;top:1995.4px;font:bold 87.00px/87.00px 'Liberation Serif', serif;color:#000;">AccBiela_L (m/s²)</div>
<div class="t" style="left:2596.3px;top:1995.4px;font:bold 87.00px/87.00px 'Liberation Serif', serif;color:#000;">AccBiela_T (m/s²)</div>
<div class="t" style="left:3422.1px;top:1995.4px;font:bold 87.00px/87.00px 'Liberation Serif', serif;color:#000;">FortaBiele (N)</div>
<svg width="4272" height="2919" viewBox="0 0 4272 2919">
<polygon fill="#000" points="213.0,55.0 226.0,55.0 219.5,62.0"/>
<polygon fill="#000" points="111.5,188.0 121.0,181.5 121.0,194.5"/>
<polygon fill="#000" points="111.5,262.0 121.0,255.5 121.0,268.5"/>
<polygon fill="#000" points="111.5,334.0 121.0,327.5 121.0,340.5"/>
<polygon fill="#000" points="111.5,405.0 121.0,398.5 121.0,411.5"/>
<polygon fill="#000" points="111.5,559.5 121.0,553.0 121.0,566.0"/>
<polygon fill="#000" points="111.5,637.0 121.0,630.5 121.0,643.5"/>
<polygon fill="#000" points="111.5,716.0 121.0,709.5 121.0,722.5"/>
<polygon fill="#000" points="111.5,793.0 121.0,786.5 121.0,799.5"/>
<polygon fill="#000" points="111.5,948.0 121.0,941.5 121.0,954.5"/>
<polygon fill="#000" points="111.5,1026.0 121.0,1019.5 121.0,1032.5"/>
<polygon fill="#000" points="111.5,1105.0 121.0,1098.5 121.0,1111.5"/>
<polygon fill="#000" points="111.5,1182.0 121.0,1175.5 121.0,1188.5"/>
<polygon fill="#000" points="111.5,1336.0 121.0,1329.5 121.0,1342.5"/>
<polygon fill="#000" points="111.5,1411.0 121.0,1404.5 121.0,1417.5"/>
<polygon fill="#000" points="111.5,1487.0 121.0,1480.5 121.0,1493.5"/>
<polygon fill="#000" points="111.5,1562.0 121.0,1555.5 121.0,1568.5"/>
<line x1="429.0" y1="159.0" x2="429.0" y2="1684.0" stroke="#000" stroke-width="2.5" />
<line x1="419.0" y1="1682.0" x2="429.0" y2="1682.0" stroke="#000" stroke-width="2.0" />
<line x1="423.0" y1="1648.2" x2="429.0" y2="1648.2" stroke="#000" stroke-width="2.0" />
<line x1="423.0" y1="1614.4" x2="429.0" y2="1614.4" stroke="#000" stroke-width="2.0" />
<line x1="423.0" y1="1580.6" x2="429.0" y2="1580.6" stroke="#000" stroke-width="2.0" />
<line x1="423.0" y1="1546.8" x2="429.0" y2="1546.8" stroke="#000" stroke-width="2.0" />
<line x1="419.0" y1="1513.0" x2="429.0" y2="1513.0" stroke="#000" stroke-width="2.0" />
<line x1="423.0" y1="1479.2" x2="429.0" y2="1479.2" stroke="#000" stroke-width="2.0" />
<line x1="423.0" y1="1445.4" x2="429.0" y2="1445.4" stroke="#000" stroke-width="2.0" />
<line x1="423.0" y1="1411.6" x2="429.0" y2="1411.6" stroke="#000" stroke-width="2.0" />
<line x1="423.0" y1="1377.8" x2="429.0" y2="1377.8" stroke="#000" stroke-width="2.0" />
<line x1="419.0" y1="1344.0" x2="429.0" y2="1344.0" stroke="#000" stroke-width="2.0" />
<line x1="423.0" y1="1310.2" x2="429.0" y2="1310.2" stroke="#000" stroke-width="2.0" />
<line x1="423.0" y1="1276.4" x2="429.0" y2="1276.4" stroke="#000" stroke-width="2.0" />
<line x1="423.0" y1="1242.6" x2="429.0" y2="1242.6" stroke="#000" stroke-width="2.0" />
<line x1="423.0" y1="1208.8" x2="429.0" y2="1208.8" stroke="#000" stroke-width="2.0" />
<line x1="419.0" y1="1175.0" x2="429.0" y2="1175.0" stroke="#000" stroke-width="2.0" />
<line x1="423.0" y1="1141.2" x2="429.0" y2="1141.2" stroke="#000" stroke-width="2.0" />
<line x1="423.0" y1="1107.4" x2="429.0" y2="1107.4" stroke="#000" stroke-width="2.0" />
<line x1="423.0" y1="1073.6" x2="429.0" y2="1073.6" stroke="#000" stroke-width="2.0" />
<line x1="423.0" y1="1039.8" x2="429.0" y2="1039.8" stroke="#000" stroke-width="2.0" />
<line x1="419.0" y1="1006.0" x2="429.0" y2="1006.0" stroke="#000" stroke-width="2.0" />
<line x1="423.0" y1="972.2" x2="429.0" y2="972.2" stroke="#000" stroke-width="2.0" />
<line x1="423.0" y1="938.4" x2="429.0" y2="938.4" stroke="#000" stroke-width="2.0" />
<line x1="423.0" y1="904.6" x2="429.0" y2="904.6" stroke="#000" stroke-width="2.0" />
<line x1="423.0" y1="870.8" x2="429.0" y2="870.8" stroke="#000" stroke-width="2.0" />
<line x1="419.0" y1="837.0" x2="429.0" y2="837.0" stroke="#000" stroke-width="2.0" />
<line x1="423.0" y1="803.2" x2="429.0" y2="803.2" stroke="#000" stroke-width="2.0" />
<line x1="423.0" y1="769.4" x2="429.0" y2="769.4" stroke="#000" stroke-width="2.0" />
<line x1="423.0" y1="735.6" x2="429.0" y2="735.6" stroke="#000" stroke-width="2.0" />
<line x1="423.0" y1="701.8" x2="429.0" y2="701.8" stroke="#000" stroke-width="2.0" />
<line x1="419.0" y1="668.0" x2="429.0" y2="668.0" stroke="#000" stroke-width="2.0" />
<line x1="423.0" y1="634.2" x2="429.0" y2="634.2" stroke="#000" stroke-width="2.0" />
<line x1="423.0" y1="600.4" x2="429.0" y2="600.4" stroke="#000" stroke-width="2.0" />
<line x1="423.0" y1="566.6" x2="429.0" y2="566.6" stroke="#000" stroke-width="2.0" />
<line x1="423.0" y1="532.8" x2="429.0" y2="532.8" stroke="#000" stroke-width="2.0" />
<line x1="419.0" y1="499.0" x2="429.0" y2="499.0" stroke="#000" stroke-width="2.0" />
<line x1="423.0" y1="465.2" x2="429.0" y2="465.2" stroke="#000" stroke-width="2.0" />
<line x1="423.0" y1="431.4" x2="429.0" y2="431.4" stroke="#000" stroke-width="2.0" />
<line x1="423.0" y1="397.6" x2="429.0" y2="397.6" stroke="#000" stroke-width="2.0" />
<line x1="423.0" y1="363.8" x2="429.0" y2="363.8" stroke="#000" stroke-width="2.0" />
<line x1="419.0" y1="330.0" x2="429.0" y2="330.0" stroke="#000" stroke-width="2.0" />
<line x1="423.0" y1="296.2" x2="429.0" y2="296.2" stroke="#000" stroke-width="2.0" />
<line x1="423.0" y1="262.4" x2="429.0" y2="262.4" stroke="#000" stroke-width="2.0" />
<line x1="423.0" y1="228.6" x2="429.0" y2="228.6" stroke="#000" stroke-width="2.0" />
<line x1="423.0" y1="194.8" x2="429.0" y2="194.8" stroke="#000" stroke-width="2.0" />
<line x1="419.0" y1="161.0" x2="429.0" y2="161.0" stroke="#000" stroke-width="2.0" />
<line x1="431.5" y1="225.0" x2="431.5" y2="1680.0" stroke="#202070" stroke-width="3.0" stroke-dasharray="4 4"/>
<line x1="1330.6" y1="159.0" x2="1330.6" y2="1682.0" stroke="#9a50aa" stroke-width="3.0" />
<line x1="1330.6" y1="1682.0" x2="1339.0" y2="1682.0" stroke="#6a2a7a" stroke-width="2.0" />
<line x1="1330.6" y1="1621.2" x2="1335.0" y2="1621.2" stroke="#6a2a7a" stroke-width="2.0" />
<line x1="1330.6" y1="1560.3" x2="1335.0" y2="1560.3" stroke="#6a2a7a" stroke-width="2.0" />
<line x1="1330.6" y1="1499.5" x2="1335.0" y2="1499.5" stroke="#6a2a7a" stroke-width="2.0" />
<line x1="1330.6" y1="1438.6" x2="1335.0" y2="1438.6" stroke="#6a2a7a" stroke-width="2.0" />
<line x1="1330.6" y1="1377.8" x2="1339.0" y2="1377.8" stroke="#6a2a7a" stroke-width="2.0" />
<line x1="1330.6" y1="1317.0" x2="1335.0" y2="1317.0" stroke="#6a2a7a" stroke-width="2.0" />
<line x1="1330.6" y1="1256.1" x2="1335.0" y2="1256.1" stroke="#6a2a7a" stroke-width="2.0" />
<line x1="1330.6" y1="1195.3" x2="1335.0" y2="1195.3" stroke="#6a2a7a" stroke-width="2.0" />
<line x1="1330.6" y1="1134.4" x2="1335.0" y2="1134.4" stroke="#6a2a7a" stroke-width="2.0" />
<line x1="1330.6" y1="1073.6" x2="1339.0" y2="1073.6" stroke="#6a2a7a" stroke-width="2.0" />
<line x1="1330.6" y1="1012.8" x2="1335.0" y2="1012.8" stroke="#6a2a7a" stroke-width="2.0" />
<line x1="1330.6" y1="951.9" x2="1335.0" y2="951.9" stroke="#6a2a7a" stroke-width="2.0" />
<line x1="1330.6" y1="891.1" x2="1335.0" y2="891.1" stroke="#6a2a7a" stroke-width="2.0" />
<line x1="1330.6" y1="830.2" x2="1335.0" y2="830.2" stroke="#6a2a7a" stroke-width="2.0" />
<line x1="1330.6" y1="769.4" x2="1339.0" y2="769.4" stroke="#6a2a7a" stroke-width="2.0" />
<line x1="1330.6" y1="708.6" x2="1335.0" y2="708.6" stroke="#6a2a7a" stroke-width="2.0" />
<line x1="1330.6" y1="647.7" x2="1335.0" y2="647.7" stroke="#6a2a7a" stroke-width="2.0" />
<line x1="1330.6" y1="586.9" x2="1335.0" y2="586.9" stroke="#6a2a7a" stroke-width="2.0" />
<line x1="1330.6" y1="526.0" x2="1335.0" y2="526.0" stroke="#6a2a7a" stroke-width="2.0" />
<line x1="1330.6" y1="465.2" x2="1339.0" y2="465.2" stroke="#6a2a7a" stroke-width="2.0" />
<line x1="1330.6" y1="404.4" x2="1335.0" y2="404.4" stroke="#6a2a7a" stroke-width="2.0" />
<line x1="1330.6" y1="343.5" x2="1335.0" y2="343.5" stroke="#6a2a7a" stroke-width="2.0" />
<line x1="1330.6" y1="282.7" x2="1335.0" y2="282.7" stroke="#6a2a7a" stroke-width="2.0" />
<line x1="1330.6" y1="221.8" x2="1335.0" y2="221.8" stroke="#6a2a7a" stroke-width="2.0" />
<line x1="1330.6" y1="161.0" x2="1339.0" y2="161.0" stroke="#6a2a7a" stroke-width="2.0" />
<line x1="2531.3" y1="159.0" x2="2531.3" y2="1682.0" stroke="#40408a" stroke-width="2.5" />
<line x1="2519.0" y1="1682.0" x2="2531.3" y2="1682.0" stroke="#202050" stroke-width="2.0" />
<line x1="2523.0" y1="1631.3" x2="2531.3" y2="1631.3" stroke="#202050" stroke-width="2.0" />
<line x1="2523.0" y1="1580.6" x2="2531.3" y2="1580.6" stroke="#202050" stroke-width="2.0" />
<line x1="2523.0" y1="1529.9" x2="2531.3" y2="1529.9" stroke="#202050" stroke-width="2.0" />
<line x1="2523.0" y1="1479.2" x2="2531.3" y2="1479.2" stroke="#202050" stroke-width="2.0" />
<line x1="2519.0" y1="1428.5" x2="2531.3" y2="1428.5" stroke="#202050" stroke-width="2.0" />
<line x1="2523.0" y1="1377.8" x2="2531.3" y2="1377.8" stroke="#202050" stroke-width="2.0" />
<line x1="2523.0" y1="1327.1" x2="2531.3" y2="1327.1" stroke="#202050" stroke-width="2.0" />
<line x1="2523.0" y1="1276.4" x2="2531.3" y2="1276.4" stroke="#202050" stroke-width="2.0" />
<line x1="2523.0" y1="1225.7" x2="2531.3" y2="1225.7" stroke="#202050" stroke-width="2.0" />
<line x1="2519.0" y1="1175.0" x2="2531.3" y2="1175.0" stroke="#202050" stroke-width="2.0" />
<line x1="2523.0" y1="1124.3" x2="2531.3" y2="1124.3" stroke="#202050" stroke-width="2.0" />
<line x1="2523.0" y1="1073.6" x2="2531.3" y2="1073.6" stroke="#202050" stroke-width="2.0" />
<line x1="2523.0" y1="1022.9" x2="2531.3" y2="1022.9" stroke="#202050" stroke-width="2.0" />
<line x1="2523.0" y1="972.2" x2="2531.3" y2="972.2" stroke="#202050" stroke-width="2.0" />
<line x1="2519.0" y1="921.5" x2="2531.3" y2="921.5" stroke="#202050" stroke-width="2.0" />
<line x1="2523.0" y1="870.8" x2="2531.3" y2="870.8" stroke="#202050" stroke-width="2.0" />
<line x1="2523.0" y1="820.1" x2="2531.3" y2="820.1" stroke="#202050" stroke-width="2.0" />
<line x1="2523.0" y1="769.4" x2="2531.3" y2="769.4" stroke="#202050" stroke-width="2.0" />
<line x1="2523.0" y1="718.7" x2="2531.3" y2="718.7" stroke="#202050" stroke-width="2.0" />
<line x1="2519.0" y1="668.0" x2="2531.3" y2="668.0" stroke="#202050" stroke-width="2.0" />
<line x1="2523.0" y1="617.3" x2="2531.3" y2="617.3" stroke="#202050" stroke-width="2.0" />
<line x1="2523.0" y1="566.6" x2="2531.3" y2="566.6" stroke="#202050" stroke-width="2.0" />
<line x1="2523.0" y1="515.9" x2="2531.3" y2="515.9" stroke="#202050" stroke-width="2.0" />
<line x1="2523.0" y1="465.2" x2="2531.3" y2="465.2" stroke="#202050" stroke-width="2.0" />
<line x1="2519.0" y1="414.5" x2="2531.3" y2="414.5" stroke="#202050" stroke-width="2.0" />
<line x1="2523.0" y1="363.8" x2="2531.3" y2="363.8" stroke="#202050" stroke-width="2.0" />
<line x1="2523.0" y1="313.1" x2="2531.3" y2="313.1" stroke="#202050" stroke-width="2.0" />
<line x1="2523.0" y1="262.4" x2="2531.3" y2="262.4" stroke="#202050" stroke-width="2.0" />
<line x1="2523.0" y1="211.7" x2="2531.3" y2="211.7" stroke="#202050" stroke-width="2.0" />
<line x1="2519.0" y1="161.0" x2="2531.3" y2="161.0" stroke="#202050" stroke-width="2.0" />
<line x1="3431.0" y1="159.0" x2="3431.0" y2="1684.0" stroke="#b04a4a" stroke-width="2.5" />
<line x1="3431.0" y1="1682.0" x2="3441.0" y2="1682.0" stroke="#a04040" stroke-width="2.0" />
<line x1="3431.0" y1="1651.6" x2="3437.0" y2="1651.6" stroke="#a04040" stroke-width="2.0" />
<line x1="3431.0" y1="1621.2" x2="3437.0" y2="1621.2" stroke="#a04040" stroke-width="2.0" />
<line x1="3431.0" y1="1590.7" x2="3437.0" y2="1590.7" stroke="#a04040" stroke-width="2.0" />
<line x1="3431.0" y1="1560.3" x2="3437.0" y2="1560.3" stroke="#a04040" stroke-width="2.0" />
<line x1="3431.0" y1="1529.9" x2="3441.0" y2="1529.9" stroke="#a04040" stroke-width="2.0" />
<line x1="3431.0" y1="1499.5" x2="3437.0" y2="1499.5" stroke="#a04040" stroke-width="2.0" />
<line x1="3431.0" y1="1469.1" x2="3437.0" y2="1469.1" stroke="#a04040" stroke-width="2.0" />
<line x1="3431.0" y1="1438.6" x2="3437.0" y2="1438.6" stroke="#a04040" stroke-width="2.0" />
<line x1="3431.0" y1="1408.2" x2="3437.0" y2="1408.2" stroke="#a04040" stroke-width="2.0" />
<line x1="3431.0" y1="1377.8" x2="3441.0" y2="1377.8" stroke="#a04040" stroke-width="2.0" />
<line x1="3431.0" y1="1347.4" x2="3437.0" y2="1347.4" stroke="#a04040" stroke-width="2.0" />
<line x1="3431.0" y1="1317.0" x2="3437.0" y2="1317.0" stroke="#a04040" stroke-width="2.0" />
<line x1="3431.0" y1="1286.5" x2="3437.0" y2="1286.5" stroke="#a04040" stroke-width="2.0" />
<line x1="3431.0" y1="1256.1" x2="3437.0" y2="1256.1" stroke="#a04040" stroke-width="2.0" />
<line x1="3431.0" y1="1225.7" x2="3441.0" y2="1225.7" stroke="#a04040" stroke-width="2.0" />
<line x1="3431.0" y1="1195.3" x2="3437.0" y2="1195.3" stroke="#a04040" stroke-width="2.0" />
<line x1="3431.0" y1="1164.9" x2="3437.0" y2="1164.9" stroke="#a04040" stroke-width="2.0" />
<line x1="3431.0" y1="1134.4" x2="3437.0" y2="1134.4" stroke="#a04040" stroke-width="2.0" />
<line x1="3431.0" y1="1104.0" x2="3437.0" y2="1104.0" stroke="#a04040" stroke-width="2.0" />
<line x1="3431.0" y1="1073.6" x2="3441.0" y2="1073.6" stroke="#a04040" stroke-width="2.0" />
<line x1="3431.0" y1="1043.2" x2="3437.0" y2="1043.2" stroke="#a04040" stroke-width="2.0" />
<line x1="3431.0" y1="1012.8" x2="3437.0" y2="1012.8" stroke="#a04040" stroke-width="2.0" />
<line x1="3431.0" y1="982.3" x2="3437.0" y2="982.3" stroke="#a04040" stroke-width="2.0" />
<line x1="3431.0" y1="951.9" x2="3437.0" y2="951.9" stroke="#a04040" stroke-width="2.0" />
<line x1="3431.0" y1="921.5" x2="3441.0" y2="921.5" stroke="#a04040" stroke-width="2.0" />
<line x1="3431.0" y1="891.1" x2="3437.0" y2="891.1" stroke="#a04040" stroke-width="2.0" />
<line x1="3431.0" y1="860.7" x2="3437.0" y2="860.7" stroke="#a04040" stroke-width="2.0" />
<line x1="3431.0" y1="830.2" x2="3437.0" y2="830.2" stroke="#a04040" stroke-width="2.0" />
<line x1="3431.0" y1="799.8" x2="3437.0" y2="799.8" stroke="#a04040" stroke-width="2.0" />
<line x1="3431.0" y1="769.4" x2="3441.0" y2="769.4" stroke="#a04040" stroke-width="2.0" />
<line x1="3431.0" y1="739.0" x2="3437.0" y2="739.0" stroke="#a04040" stroke-width="2.0" />
<line x1="3431.0" y1="708.6" x2="3437.0" y2="708.6" stroke="#a04040" stroke-width="2.0" />
<line x1="3431.0" y1="678.1" x2="3437.0" y2="678.1" stroke="#a04040" stroke-width="2.0" />
<line x1="3431.0" y1="647.7" x2="3437.0" y2="647.7" stroke="#a04040" stroke-width="2.0" />
<line x1="3431.0" y1="617.3" x2="3441.0" y2="617.3" stroke="#a04040" stroke-width="2.0" />
<line x1="3431.0" y1="586.9" x2="3437.0" y2="586.9" stroke="#a04040" stroke-width="2.0" />
<line x1="3431.0" y1="556.5" x2="3437.0" y2="556.5" stroke="#a04040" stroke-width="2.0" />
<line x1="3431.0" y1="526.0" x2="3437.0" y2="526.0" stroke="#a04040" stroke-width="2.0" />
<line x1="3431.0" y1="495.6" x2="3437.0" y2="495.6" stroke="#a04040" stroke-width="2.0" />
<line x1="3431.0" y1="465.2" x2="3441.0" y2="465.2" stroke="#a04040" stroke-width="2.0" />
<line x1="3431.0" y1="434.8" x2="3437.0" y2="434.8" stroke="#a04040" stroke-width="2.0" />
<line x1="3431.0" y1="404.4" x2="3437.0" y2="404.4" stroke="#a04040" stroke-width="2.0" />
<line x1="3431.0" y1="373.9" x2="3437.0" y2="373.9" stroke="#a04040" stroke-width="2.0" />
<line x1="3431.0" y1="343.5" x2="3437.0" y2="343.5" stroke="#a04040" stroke-width="2.0" />
<line x1="3431.0" y1="313.1" x2="3441.0" y2="313.1" stroke="#a04040" stroke-width="2.0" />
<line x1="3431.0" y1="282.7" x2="3437.0" y2="282.7" stroke="#a04040" stroke-width="2.0" />
<line x1="3431.0" y1="252.3" x2="3437.0" y2="252.3" stroke="#a04040" stroke-width="2.0" />
<line x1="3431.0" y1="221.8" x2="3437.0" y2="221.8" stroke="#a04040" stroke-width="2.0" />
<line x1="3431.0" y1="191.4" x2="3437.0" y2="191.4" stroke="#a04040" stroke-width="2.0" />
<line x1="3431.0" y1="161.0" x2="3441.0" y2="161.0" stroke="#a04040" stroke-width="2.0" />
<line x1="427.0" y1="1682.0" x2="3433.0" y2="1682.0" stroke="#000" stroke-width="2.5" />
<line x1="429.0" y1="1682.0" x2="429.0" y2="1693.0" stroke="#000" stroke-width="2.0" />
<line x1="1029.4" y1="1682.0" x2="1029.4" y2="1693.0" stroke="#000" stroke-width="2.0" />
<line x1="1629.8" y1="1682.0" x2="1629.8" y2="1693.0" stroke="#000" stroke-width="2.0" />
<line x1="2230.2" y1="1682.0" x2="2230.2" y2="1693.0" stroke="#000" stroke-width="2.0" />
<line x1="2830.6" y1="1682.0" x2="2830.6" y2="1693.0" stroke="#000" stroke-width="2.0" />
<line x1="3431.0" y1="1682.0" x2="3431.0" y2="1693.0" stroke="#000" stroke-width="2.0" />
<polyline fill="none" stroke="#a53a3a" stroke-width="2.2" stroke-linejoin="miter"  points="430.7,1635.7 439.6,1560.7 448.6,1562.5 464.6,1584.0 475.0,1587.5 486.0,1648.0 504.0,1535.7 513.0,1584.0 523.6,1564.0 532.5,1569.6 539.6,1610.7 550.0,1587.5 559.0,1621.0 568.0,1623.0 577.0,1641.0 586.0,1510.7 604.0,1655.0 623.6,1468.0 631.0,1250.0 640.4,384.0 650.0,1250.0 657.5,1535.7 670.0,1541.0 679.0,1582.0 688.0,1562.5 697.0,1610.7 705.7,1625.0 714.6,1664.0 723.6,1628.6 732.5,1646.0 743.0,1621.4 752.0,1664.0 761.0,1619.6 777.0,1660.7 788.0,1625.0 798.6,1660.7 807.5,1646.0 816.0,1653.6 834.0,1237.5 854.0,1466.0 861.0,1462.5 872.0,1605.0 880.7,1603.6 889.6,1664.0 898.6,1657.0 918.0,1618.0 934.0,1621.0 954.0,1664.0 963.0,1632.0 972.0,1664.0 1005.7,1635.7 1016.0,1641.0 1034.0,1528.6 1043.0,1543.0 1061.0,1532.0 1073.6,1587.5 1080.7,1591.0 1091.0,1625.0 1098.6,1618.0 1125.0,1671.4 1145.0,1619.6 1163.0,1668.0 1198.6,1623.0 1200.0,1622.0 1219.4,1657.0 1246.5,1589.7 1273.6,1648.0 1302.0,1668.5 1318.8,1650.4 1330.4,1660.7 1347.0,1636.0 1365.0,1679.0 1392.4,1655.6 1404.0,1679.0 1420.8,1650.4 1431.0,1664.6 1451.7,1647.8 1458.0,1627.0 1466.0,1671.0 1484.0,1631.0 1504.7,1654.0 1512.4,1638.8 1533.0,1671.0 1556.0,1673.6 1577.0,1672.0 1602.8,1668.5 1623.4,1677.5 1628.6,1668.5 1657.0,1668.5 1677.7,1655.6 1690.6,1677.5 1712.5,1663.0 1729.0,1679.0 1744.8,1676.0 1761.6,1659.4 1778.4,1672.4 1800.0,1663.0 1807.3,1674.6 1816.4,1670.5 1825.6,1661.0 1834.8,1670.5 1844.0,1678.8 1853.2,1671.4 1862.3,1670.0 1871.5,1638.0 1880.7,1602.0 1889.9,1638.0 1899.1,1670.0 1908.2,1674.0 1917.4,1679.3 1926.6,1670.0 1935.8,1681.6 1945.0,1676.5 1954.2,1673.9 1963.3,1671.5 1972.5,1673.9 1981.7,1674.4 1990.9,1673.1 2000.1,1671.3 2009.2,1678.9 2018.4,1674.7 2027.6,1671.0 2036.8,1672.0 2046.0,1678.1 2055.1,1673.2 2064.3,1672.1 2073.5,1676.2 2082.7,1661.7 2091.9,1645.0 2101.0,1661.7 2110.2,1675.7 2119.4,1680.5 2128.6,1675.3 2137.8,1670.1 2146.9,1671.8 2156.1,1674.1 2165.3,1678.5 2174.5,1674.0 2183.7,1676.1 2192.8,1671.5 2202.0,1667.0 2211.2,1671.5 2220.4,1673.7 2229.6,1680.5 2238.7,1675.8 2247.9,1677.4 2257.1,1680.2 2266.3,1674.5 2275.5,1677.2 2284.6,1670.5 2293.8,1661.0 2303.0,1670.5 2312.2,1678.8 2321.4,1679.5 2330.5,1674.8 2339.7,1680.9 2348.9,1681.1 2358.1,1674.1 2367.3,1676.8 2376.5,1678.9 2385.6,1674.2 2394.8,1679.9 2404.0,1676.7 2413.2,1680.9 2422.4,1679.0 2431.5,1675.2 2440.7,1674.0 2449.9,1674.4 2459.1,1679.4 2468.3,1677.5 2477.4,1679.9 2486.6,1675.7 2495.8,1667.3 2505.0,1661.0 2514.2,1667.3 2523.3,1675.7 2532.5,1673.6 2541.7,1680.3 2550.9,1681.1 2560.1,1678.8 2569.2,1680.3 2578.4,1680.8 2587.6,1679.1 2596.8,1677.1 2606.0,1678.4 2615.1,1680.0 2624.3,1674.8 2633.5,1673.2 2642.7,1678.8 2651.9,1681.7 2661.0,1681.9 2670.2,1674.5 2679.4,1681.6 2688.6,1676.2 2697.8,1676.5 2706.9,1672.0 2716.1,1675.4 2725.3,1680.5 2734.5,1681.3 2743.7,1678.8 2752.8,1681.9 2762.0,1674.9 2771.2,1680.6 2780.4,1681.3 2789.6,1681.8 2798.8,1677.1 2807.9,1678.8 2817.1,1677.1 2826.3,1676.8 2835.5,1675.2 2844.7,1673.5 2853.8,1676.5 2863.0,1680.9 2872.2,1678.6 2881.4,1679.6 2890.6,1674.8 2899.7,1665.2 2908.9,1658.0 2918.1,1665.2 2927.3,1674.8 2936.5,1679.6 2945.6,1676.4 2954.8,1678.1 2964.0,1677.2 2973.2,1675.7 2982.4,1679.3 2991.5,1675.4 3000.7,1674.1 3009.9,1681.6 3019.1,1673.8 3028.3,1676.1 3037.4,1681.4 3046.6,1678.8 3055.8,1677.1 3065.0,1674.0 3074.2,1679.5 3083.3,1677.7 3092.5,1674.4 3101.7,1675.3 3110.9,1673.6 3120.1,1674.0 3129.2,1676.8 3138.4,1680.8 3147.6,1676.1 3156.8,1675.1 3166.0,1676.9 3175.1,1676.2 3184.3,1680.8 3193.5,1674.2 3202.7,1673.2 3211.9,1673.3 3221.1,1678.0 3230.2,1675.4 3239.4,1680.0 3248.6,1674.0 3257.8,1674.6 3267.0,1679.7 3276.1,1681.6 3285.3,1678.9 3294.5,1677.9 3303.7,1675.6 3312.9,1677.6 3322.0,1674.0 3331.2,1675.2 3340.4,1680.8 3349.6,1675.3 3358.8,1681.1 3367.9,1679.8 3377.1,1675.4 3386.3,1681.3 3395.5,1681.2 3404.7,1678.2 3413.8,1676.1 3423.0,1674.8 3432.2,1676.5"/>
<polyline fill="none" stroke="#3f7f3f" stroke-width="2.2" stroke-linejoin="miter"  points="430.2,1634.0 439.4,1560.0 448.6,1672.0 457.7,1645.0 466.9,1671.0 476.1,1678.0 485.3,1665.0 494.5,1651.0 503.6,1670.0 512.8,1677.0 522.0,1674.0 531.2,1676.0 540.4,1672.0 549.5,1668.0 558.7,1673.0 567.9,1675.0 577.1,1670.0 586.3,1672.0 595.4,1667.0 604.6,1668.3 613.8,1627.0 623.0,1489.6 632.2,582.3 641.3,307.4 650.5,1200.9 659.7,1613.3 668.9,1647.6 678.1,1668.3 687.3,1677.0 696.4,1677.8 705.6,1680.6 714.8,1674.4 724.0,1680.2 733.2,1676.2 742.3,1674.5 751.5,1677.4 760.7,1681.4 769.9,1675.8 779.1,1677.3 788.2,1681.1 797.4,1681.8 806.6,1678.5 815.8,1672.1 825.0,1645.0 834.1,1546.4 843.3,1435.4 852.5,1546.4 861.7,1645.0 870.9,1672.1 880.0,1680.3 889.2,1679.8 898.4,1678.0 907.6,1680.3 916.8,1677.9 925.9,1678.4 935.1,1679.3 944.3,1677.2 953.5,1678.5 962.7,1681.7 971.8,1674.0 981.0,1679.9 990.2,1679.3 999.4,1679.5 1008.6,1674.7 1017.7,1678.2 1026.9,1673.3 1036.1,1649.2 1045.3,1561.8 1054.5,1463.4 1063.6,1561.8 1072.8,1649.2 1082.0,1673.3 1091.2,1681.1 1100.4,1681.0 1109.6,1681.5 1118.7,1681.9 1127.9,1680.2 1137.1,1679.0 1146.3,1679.7 1155.5,1681.5 1164.6,1679.5 1173.8,1681.9 1183.0,1680.7 1192.2,1678.9 1201.4,1678.4 1210.5,1680.5 1219.7,1678.8 1228.9,1677.6 1238.1,1665.6 1247.3,1621.8 1256.4,1572.6 1265.6,1621.8 1274.8,1665.6 1284.0,1677.6 1293.2,1679.7 1302.3,1681.0 1311.5,1679.1 1320.7,1678.9 1329.9,1679.9 1339.1,1678.3 1348.2,1682.0 1357.4,1680.4 1366.6,1679.8 1375.8,1681.0 1385.0,1681.6 1394.1,1679.5 1403.3,1680.6 1412.5,1681.3 1421.7,1681.9 1430.9,1678.2 1440.0,1671.2 1449.2,1641.4 1458.4,1533.3 1467.6,1411.6 1476.8,1533.3 1485.9,1641.4 1495.1,1671.2 1504.3,1681.8 1513.5,1680.5 1522.7,1681.5 1531.9,1681.0 1541.0,1679.3 1550.2,1678.4 1559.4,1678.8 1568.6,1681.9 1577.8,1680.9 1586.9,1678.8 1596.1,1682.0 1605.3,1681.5 1614.5,1680.4 1623.7,1680.9 1632.8,1679.2 1642.0,1679.4 1651.2,1677.5 1660.4,1665.5 1669.6,1652.0 1678.7,1665.5 1687.9,1677.5 1697.1,1679.6 1706.3,1681.6 1715.5,1678.6 1724.6,1679.7 1733.8,1681.9 1743.0,1680.4 1752.2,1679.9 1761.4,1681.9 1770.5,1680.4 1779.7,1682.0 1788.9,1679.2 1798.1,1682.0 1807.3,1679.8 1816.4,1678.1 1825.6,1678.8 1834.8,1681.4 1844.0,1680.2 1853.2,1678.7 1862.3,1669.7 1871.5,1636.9 1880.7,1600.0 1889.9,1636.9 1899.1,1669.7 1908.2,1678.7 1917.4,1681.6 1926.6,1679.0 1935.8,1678.5 1945.0,1680.2 1954.2,1680.9 1963.3,1678.8 1972.5,1680.3 1981.7,1681.5 1990.9,1681.2 2000.1,1681.6 2009.2,1678.8 2018.4,1680.3 2027.6,1679.5 2036.8,1678.9 2046.0,1678.1 2055.1,1681.5 2064.3,1679.6 2073.5,1672.8 2082.7,1648.5 2091.9,1621.0 2101.0,1648.5 2110.2,1672.8 2119.4,1679.6 2128.6,1681.9 2137.8,1680.9 2146.9,1681.4 2156.1,1680.3 2165.3,1678.2 2174.5,1681.7 2183.7,1680.1 2192.8,1678.7 2202.0,1679.9 2211.2,1680.3 2220.4,1679.2 2229.6,1682.0 2238.7,1678.3 2247.9,1679.5 2257.1,1679.0 2266.3,1678.9 2275.5,1673.9 2284.6,1652.3 2293.8,1628.0 2303.0,1652.3 2312.2,1673.9 2321.4,1678.5 2330.5,1680.7 2339.7,1679.8 2348.9,1679.3 2358.1,1681.0 2367.3,1678.2 2376.5,1678.3 2385.6,1679.4 2394.8,1678.5 2404.0,1679.0 2413.2,1679.7 2422.4,1681.1 2431.5,1681.2 2440.7,1681.4 2449.9,1681.9 2459.1,1678.4 2468.3,1681.2 2477.4,1681.7 2486.6,1680.8 2495.8,1677.6 2505.0,1674.0 2514.2,1677.6 2523.3,1680.8 2532.5,1680.5 2541.7,1680.7 2550.9,1681.0 2560.1,1678.9 2569.2,1681.1 2578.4,1680.2 2587.6,1678.6 2596.8,1678.2 2606.0,1680.9 2615.1,1681.9 2624.3,1678.3 2633.5,1680.3 2642.7,1681.4 2651.9,1681.7 2661.0,1681.4 2670.2,1681.1 2679.4,1680.9 2688.6,1677.8 2697.8,1666.6 2706.9,1654.0 2716.1,1666.6 2725.3,1677.8 2734.5,1679.0 2743.7,1680.4 2752.8,1681.9 2762.0,1681.0 2771.2,1680.9 2780.4,1678.4 2789.6,1680.0 2798.8,1680.5 2807.9,1679.8 2817.1,1681.9 2826.3,1679.5 2835.5,1679.0 2844.7,1679.6 2853.8,1680.9 2863.0,1681.2 2872.2,1682.0 2881.4,1681.6 2890.6,1680.5 2899.7,1676.5 2908.9,1672.0 2918.1,1676.5 2927.3,1680.5 2936.5,1679.8 2945.6,1679.8 2954.8,1682.0 2964.0,1678.4 2973.2,1680.0 2982.4,1681.2 2991.5,1681.4 3000.7,1679.5 3009.9,1678.3 3019.1,1681.0 3028.3,1680.8 3037.4,1680.1 3046.6,1681.6 3055.8,1680.8 3065.0,1678.4 3074.2,1680.1 3083.3,1678.9 3092.5,1681.3 3101.7,1678.7 3110.9,1677.6 3120.1,1674.0 3129.2,1677.6 3138.4,1679.6 3147.6,1680.1 3156.8,1679.9 3166.0,1681.4 3175.1,1680.1 3184.3,1681.0 3193.5,1679.0 3202.7,1680.9 3211.9,1678.1 3221.1,1680.0 3230.2,1681.4 3239.4,1680.7 3248.6,1681.7 3257.8,1679.3 3267.0,1681.9 3276.1,1679.9 3285.3,1681.1 3294.5,1679.1 3303.7,1680.5 3312.9,1676.5 3322.0,1672.0 3331.2,1676.5 3340.4,1680.5 3349.6,1680.9 3358.8,1679.7 3367.9,1681.3 3377.1,1682.0 3386.3,1680.6 3395.5,1679.0 3404.7,1681.6 3413.8,1678.3 3423.0,1680.3 3432.2,1681.6"/>
<polyline fill="none" stroke="#1a1a1a" stroke-width="2.2" stroke-linejoin="miter"  points="430.2,1673.0 439.4,1670.0 448.6,1674.0 457.7,1674.0 466.9,1676.0 476.1,1677.0 485.3,1675.0 494.5,1674.0 503.6,1674.0 512.8,1673.0 522.0,1674.0 531.2,1672.0 540.4,1673.0 549.5,1672.0 558.7,1670.0 567.9,1668.0 577.1,1666.0 586.3,1662.0 595.4,1657.0 604.6,1667.5 613.8,1624.1 623.0,1479.5 632.2,524.7 641.3,235.4 650.5,1175.7 659.7,1609.7 668.9,1645.8 678.1,1667.5 687.3,1680.5 696.4,1678.4 705.6,1681.5 714.8,1681.3 724.0,1681.3 733.2,1681.9 742.3,1679.6 751.5,1678.9 760.7,1680.6 769.9,1681.9 779.1,1679.4 788.2,1679.3 797.4,1679.7 806.6,1681.1 815.8,1677.1 825.0,1663.6 834.1,1614.6 843.3,1559.4 852.5,1614.6 861.7,1663.6 870.9,1677.1 880.0,1679.6 889.2,1681.0 898.4,1678.9 907.6,1678.8 916.8,1681.9 925.9,1681.6 935.1,1681.4 944.3,1682.0 953.5,1679.2 962.7,1679.7 971.8,1680.2 981.0,1678.0 990.2,1681.0 999.4,1681.5 1008.6,1681.8 1017.7,1681.0 1026.9,1678.8 1036.1,1679.9 1045.3,1680.2 1054.5,1678.8 1063.6,1680.2 1072.8,1679.8 1082.0,1681.7 1091.2,1681.6 1100.4,1679.7 1109.6,1678.8 1118.7,1679.9 1127.9,1681.2 1137.1,1679.7 1146.3,1681.3 1155.5,1682.0 1164.6,1681.3 1173.8,1679.5 1183.0,1679.8 1192.2,1681.5 1201.4,1678.8 1210.5,1678.9 1219.7,1681.2 1228.9,1678.2 1238.1,1681.3 1247.3,1681.9 1256.4,1680.3 1265.6,1678.7 1274.8,1679.9 1284.0,1680.2 1293.2,1680.4 1302.3,1681.2 1311.5,1681.2 1320.7,1680.8 1329.9,1680.2 1339.1,1678.3 1348.2,1681.9 1357.4,1681.3 1366.6,1678.3 1375.8,1679.7 1385.0,1681.9 1394.1,1680.6 1403.3,1679.7 1412.5,1678.5 1421.7,1681.8 1430.9,1678.5 1440.0,1679.1 1449.2,1681.2 1458.4,1680.2 1467.6,1678.9 1476.8,1681.4 1485.9,1679.5 1495.1,1680.1 1504.3,1681.9 1513.5,1681.3 1522.7,1680.7 1531.9,1681.7 1541.0,1678.3 1550.2,1681.3 1559.4,1681.4 1568.6,1680.0 1577.8,1680.3 1586.9,1681.1 1596.1,1681.1 1605.3,1680.4 1614.5,1678.5 1623.7,1681.9 1632.8,1678.5 1642.0,1678.3 1651.2,1676.0 1660.4,1660.0 1669.6,1642.0 1678.7,1660.0 1687.9,1676.0 1697.1,1679.3 1706.3,1672.1 1715.5,1664.0 1724.6,1672.1 1733.8,1679.3 1743.0,1681.3 1752.2,1681.1 1761.4,1680.2 1770.5,1681.5 1779.7,1681.7 1788.9,1681.5 1798.1,1682.0 1807.3,1681.7 1816.4,1680.8 1825.6,1680.4 1834.8,1679.8 1844.0,1681.1 1853.2,1681.7 1862.3,1678.4 1871.5,1679.8 1880.7,1679.6 1889.9,1679.5 1899.1,1681.1 1908.2,1680.0 1917.4,1681.1 1926.6,1679.7 1935.8,1678.9 1945.0,1682.0 1954.2,1679.0 1963.3,1681.8 1972.5,1682.0 1981.7,1681.9 1990.9,1680.1 2000.1,1678.7 2009.2,1678.4 2018.4,1681.6 2027.6,1680.7 2036.8,1678.3 2046.0,1678.6 2055.1,1678.9 2064.3,1681.3 2073.5,1681.3 2082.7,1681.7 2091.9,1681.3 2101.0,1680.8 2110.2,1679.0 2119.4,1679.7 2128.6,1681.6 2137.8,1681.6 2146.9,1680.6 2156.1,1678.6 2165.3,1680.5 2174.5,1679.1 2183.7,1679.5 2192.8,1678.6 2202.0,1680.4 2211.2,1680.9 2220.4,1680.6 2229.6,1679.0 2238.7,1681.2 2247.9,1681.5 2257.1,1678.8 2266.3,1680.5 2275.5,1679.8 2284.6,1681.6 2293.8,1681.9 2303.0,1681.4 2312.2,1680.7 2321.4,1682.0 2330.5,1681.3 2339.7,1678.3 2348.9,1680.6 2358.1,1682.0 2367.3,1679.0 2376.5,1681.2 2385.6,1681.6 2394.8,1679.8 2404.0,1679.6 2413.2,1681.1 2422.4,1679.4 2431.5,1678.6 2440.7,1681.0 2449.9,1680.4 2459.1,1682.0 2468.3,1680.0 2477.4,1681.2 2486.6,1679.7 2495.8,1679.2 2505.0,1681.0 2514.2,1679.6 2523.3,1678.3 2532.5,1681.6 2541.7,1679.0 2550.9,1680.5 2560.1,1678.3 2569.2,1681.9 2578.4,1680.9 2587.6,1681.6 2596.8,1681.3 2606.0,1678.6 2615.1,1680.2 2624.3,1680.9 2633.5,1678.2 2642.7,1681.9 2651.9,1682.0 2661.0,1679.2 2670.2,1680.1 2679.4,1678.8 2688.6,1680.4 2697.8,1677.6 2706.9,1674.0 2716.1,1677.6 2725.3,1678.6 2734.5,1680.2 2743.7,1682.0 2752.8,1682.0 2762.0,1682.0 2771.2,1679.3 2780.4,1679.8 2789.6,1681.8 2798.8,1679.0 2807.9,1679.1 2817.1,1679.8 2826.3,1680.0 2835.5,1680.6 2844.7,1679.5 2853.8,1680.8 2863.0,1678.4 2872.2,1680.0 2881.4,1679.6 2890.6,1678.4 2899.7,1678.1 2908.9,1680.2 2918.1,1681.8 2927.3,1680.3 2936.5,1678.4 2945.6,1681.5 2954.8,1681.3 2964.0,1681.3 2973.2,1681.4 2982.4,1678.9 2991.5,1680.2 3000.7,1681.8 3009.9,1680.3 3019.1,1679.5 3028.3,1682.0 3037.4,1681.5 3046.6,1682.0 3055.8,1679.5 3065.0,1680.8 3074.2,1682.0 3083.3,1681.4 3092.5,1681.5 3101.7,1680.1 3110.9,1677.6 3120.1,1674.0 3129.2,1677.6 3138.4,1680.8 3147.6,1681.1 3156.8,1679.8 3166.0,1680.2 3175.1,1680.0 3184.3,1681.6 3193.5,1681.9 3202.7,1679.2 3211.9,1679.4 3221.1,1679.7 3230.2,1678.2 3239.4,1681.1 3248.6,1679.3 3257.8,1681.2 3267.0,1679.9 3276.1,1678.5 3285.3,1680.6 3294.5,1679.9 3303.7,1678.1 3312.9,1680.4 3322.0,1681.4 3331.2,1678.2 3340.4,1679.6 3349.6,1681.1 3358.8,1681.3 3367.9,1682.0 3377.1,1681.8 3386.3,1678.1 3395.5,1680.1 3404.7,1679.1 3413.8,1681.4 3423.0,1678.8 3432.2,1679.5"/>
<polyline fill="none" stroke="#2a3a98" stroke-width="2.2" stroke-linejoin="miter"  points="430.2,1672.0 439.4,1662.0 448.6,1673.0 457.7,1667.0 466.9,1675.0 476.1,1678.0 485.3,1667.0 494.5,1672.0 503.6,1670.0 512.8,1673.0 522.0,1674.0 531.2,1670.0 540.4,1671.0 549.5,1673.0 558.7,1668.0 567.9,1666.0 577.1,1662.0 586.3,1652.0 595.4,1649.0 604.6,1667.0 613.8,1622.0 623.0,1472.0 632.2,481.8 641.3,181.7 650.5,1156.9 659.7,1607.0 668.9,1644.5 678.1,1667.0 687.3,1681.7 696.4,1668.4 705.6,1679.3 714.8,1680.1 724.0,1669.9 733.2,1672.4 742.3,1681.1 751.5,1678.8 760.7,1679.8 769.9,1679.4 779.1,1682.0 788.2,1675.9 797.4,1679.0 806.6,1677.8 815.8,1677.7 825.0,1666.0 834.1,1623.2 843.3,1575.1 852.5,1623.2 861.7,1666.0 870.9,1677.7 880.0,1680.8 889.2,1681.1 898.4,1678.9 907.6,1681.7 916.8,1679.4 925.9,1680.2 935.1,1680.4 944.3,1673.9 953.5,1676.9 962.7,1676.7 971.8,1678.3 981.0,1675.7 990.2,1671.8 999.4,1679.0 1008.6,1681.6 1017.7,1680.1 1026.9,1679.3 1036.1,1674.0 1045.3,1663.3 1054.5,1655.3 1063.6,1663.3 1072.8,1674.0 1082.0,1679.3 1091.2,1680.9 1100.4,1677.7 1109.6,1678.8 1118.7,1681.5 1127.9,1680.0 1137.1,1679.4 1146.3,1681.9 1155.5,1681.8 1164.6,1679.4 1173.8,1678.7 1183.0,1680.2 1192.2,1680.4 1201.4,1679.9 1210.5,1681.1 1219.7,1677.8 1228.9,1677.2 1238.1,1680.1 1247.3,1682.0 1256.4,1680.5 1265.6,1678.2 1274.8,1680.8 1284.0,1681.7 1293.2,1681.4 1302.3,1678.8 1311.5,1679.3 1320.7,1681.0 1329.9,1679.3 1339.1,1678.5 1348.2,1677.2 1357.4,1678.1 1366.6,1680.3 1375.8,1678.2 1385.0,1677.5 1394.1,1677.8 1403.3,1678.6 1412.5,1679.5 1421.7,1679.9 1430.9,1678.0 1440.0,1679.3 1449.2,1678.7 1458.4,1681.3 1467.6,1681.8 1476.8,1681.1 1485.9,1679.5 1495.1,1679.6 1504.3,1681.4 1513.5,1681.4 1522.7,1677.3 1531.9,1681.8 1541.0,1677.5 1550.2,1678.4 1559.4,1679.6 1568.6,1677.0 1577.8,1679.0 1586.9,1682.0 1596.1,1677.4 1605.3,1680.4 1614.5,1677.5 1623.7,1678.2 1632.8,1681.6 1642.0,1680.2 1651.2,1675.4 1660.4,1657.8 1669.6,1638.0 1678.7,1657.8 1687.9,1675.4 1697.1,1678.8 1706.3,1670.5 1715.5,1661.0 1724.6,1670.5 1733.8,1677.2 1743.0,1678.5 1752.2,1678.0 1761.4,1682.0 1770.5,1682.0 1779.7,1677.9 1788.9,1679.3 1798.1,1680.8 1807.3,1681.7 1816.4,1680.8 1825.6,1680.8 1834.8,1680.0 1844.0,1680.2 1853.2,1681.4 1862.3,1680.3 1871.5,1676.0 1880.7,1671.0 1889.9,1676.0 1899.1,1680.3 1908.2,1681.6 1917.4,1678.3 1926.6,1679.7 1935.8,1680.2 1945.0,1679.2 1954.2,1681.2 1963.3,1682.0 1972.5,1681.8 1981.7,1680.8 1990.9,1680.7 2000.1,1681.2 2009.2,1680.9 2018.4,1678.1 2027.6,1682.0 2036.8,1680.2 2046.0,1680.6 2055.1,1681.0 2064.3,1678.7 2073.5,1681.3 2082.7,1681.9 2091.9,1681.5 2101.0,1677.1 2110.2,1680.7 2119.4,1681.7 2128.6,1677.2 2137.8,1679.2 2146.9,1677.3 2156.1,1680.8 2165.3,1678.2 2174.5,1681.9 2183.7,1681.2 2192.8,1678.3 2202.0,1679.9 2211.2,1678.3 2220.4,1680.6 2229.6,1677.8 2238.7,1681.8 2247.9,1679.3 2257.1,1681.4 2266.3,1681.4 2275.5,1677.7 2284.6,1677.6 2293.8,1674.0 2303.0,1677.6 2312.2,1678.7 2321.4,1677.6 2330.5,1679.3 2339.7,1681.2 2348.9,1679.0 2358.1,1677.3 2367.3,1678.3 2376.5,1680.3 2385.6,1680.5 2394.8,1681.8 2404.0,1678.4 2413.2,1681.5 2422.4,1681.3 2431.5,1681.9 2440.7,1681.5 2449.9,1680.6 2459.1,1680.1 2468.3,1681.5 2477.4,1680.4 2486.6,1678.5 2495.8,1681.8 2505.0,1681.6 2514.2,1679.9 2523.3,1677.6 2532.5,1677.5 2541.7,1679.6 2550.9,1681.8 2560.1,1677.8 2569.2,1677.0 2578.4,1677.6 2587.6,1679.8 2596.8,1680.6 2606.0,1679.5 2615.1,1678.3 2624.3,1677.0 2633.5,1680.0 2642.7,1679.9 2651.9,1680.9 2661.0,1679.8 2670.2,1679.7 2679.4,1681.0 2688.6,1680.2 2697.8,1677.5 2706.9,1681.2 2716.1,1681.2 2725.3,1680.9 2734.5,1677.9 2743.7,1680.9 2752.8,1678.1 2762.0,1677.5 2771.2,1677.8 2780.4,1678.2 2789.6,1681.4 2798.8,1680.2 2807.9,1678.1 2817.1,1681.2 2826.3,1679.4 2835.5,1677.8 2844.7,1677.4 2853.8,1680.7 2863.0,1681.7 2872.2,1681.9 2881.4,1680.9 2890.6,1679.7 2899.7,1681.0 2908.9,1678.1 2918.1,1679.1 2927.3,1679.3 2936.5,1678.1 2945.6,1680.8 2954.8,1679.1 2964.0,1680.7 2973.2,1681.0 2982.4,1681.7 2991.5,1678.3 3000.7,1677.6 3009.9,1681.9 3019.1,1678.8 3028.3,1681.9 3037.4,1680.4 3046.6,1680.9 3055.8,1677.6 3065.0,1680.3 3074.2,1679.9 3083.3,1680.7 3092.5,1681.2 3101.7,1680.5 3110.9,1676.5 3120.1,1672.0 3129.2,1676.5 3138.4,1678.6 3147.6,1679.0 3156.8,1681.1 3166.0,1677.1 3175.1,1681.8 3184.3,1680.3 3193.5,1680.8 3202.7,1681.5 3211.9,1677.3 3221.1,1678.8 3230.2,1681.6 3239.4,1681.5 3248.6,1678.2 3257.8,1680.6 3267.0,1680.9 3276.1,1681.0 3285.3,1680.8 3294.5,1679.5 3303.7,1680.2 3312.9,1675.4 3322.0,1670.0 3331.2,1675.4 3340.4,1679.5 3349.6,1680.9 3358.8,1677.8 3367.9,1677.5 3377.1,1679.1 3386.3,1680.4 3395.5,1681.5 3404.7,1679.3 3413.8,1681.0 3423.0,1681.5 3432.2,1679.8"/>
<line x1="641.4" y1="245.0" x2="641.4" y2="1680.0" stroke="#b02030" stroke-width="2.5" stroke-dasharray="7 6"/>
<polyline fill="none" stroke="#0a14e0" stroke-width="5.5" stroke-linejoin="miter"  points="3564.0,857.8 1674.0,851.6 662.0,228.0"/>
<polygon fill="#0a14e0" points="648.0,218.5 682.5,221.5 666.3,247.6"/>
<polyline fill="none" stroke="#ee1010" stroke-width="5.0" stroke-linejoin="miter"  points="3602.0,1083.7 1572.0,1094.0 882.0,1328.0"/>
<polygon fill="#ee1010" points="863.4,1336.0 883.6,1309.4 892.9,1340.2"/>
<polyline fill="none" stroke="#149414" stroke-width="4.8" stroke-linejoin="miter"  points="3566.0,1273.0 1689.5,1273.0 1503.0,1419.0"/>
<polygon fill="#149414" points="1489.5,1430.3 1504.2,1400.2 1523.8,1424.3"/>
<polyline fill="none" stroke="#000" stroke-width="5.5" stroke-linejoin="miter"  points="3566.0,1474.0 1236.0,1487.5 1078.0,1630.0"/>
<polygon fill="#000" points="1061.3,1643.0 1072.0,1612.2 1093.1,1637.0"/>
</svg>
<div class="b" style="left:3611.0px;top:834.0px;width:606.0px;height:122.0px;background:#fff;border:5.5px solid #0a14e6;box-sizing:border-box;"></div>
<div class="t" style="left:3637.0px;top:840.8px;font:normal 79.94px/79.94px 'Liberation Sans', sans-serif;color:#0a14e6;transform:scaleX(0.9689);transform-origin:0 0;">AmpAccBiela_T</div>
<div class="b" style="left:3602.0px;top:1045.0px;width:616.0px;height:118.0px;background:#fff;border:4.5px solid #ee1111;box-sizing:border-box;"></div>
<div class="t" style="left:3635.0px;top:1051.3px;font:normal 79.94px/79.94px 'Liberation Sans', sans-serif;color:#ee1111;transform:scaleX(0.9675);transform-origin:0 0;">AmpAccBiela_L</div>
<div class="b" style="left:3612.0px;top:1252.0px;width:572.0px;height:118.0px;background:#fff;border:4.5px solid #129912;box-sizing:border-box;"></div>
<div class="t" style="left:3640.0px;top:1257.7px;font:normal 79.94px/79.94px 'Liberation Sans', sans-serif;color:#129912;transform:scaleX(0.9646);transform-origin:0 0;">AmpFortaBiele</div>
<div class="b" style="left:3617.0px;top:1454.0px;width:627.0px;height:115.0px;background:#fff;border:5.0px solid #000;box-sizing:border-box;"></div>
<div class="t" style="left:3641.0px;top:1461.3px;font:normal 79.94px/79.94px 'Liberation Sans', sans-serif;color:#000;transform:scaleX(0.9637);transform-origin:0 0;">AmpCursaPiston</div>
</body></html>
